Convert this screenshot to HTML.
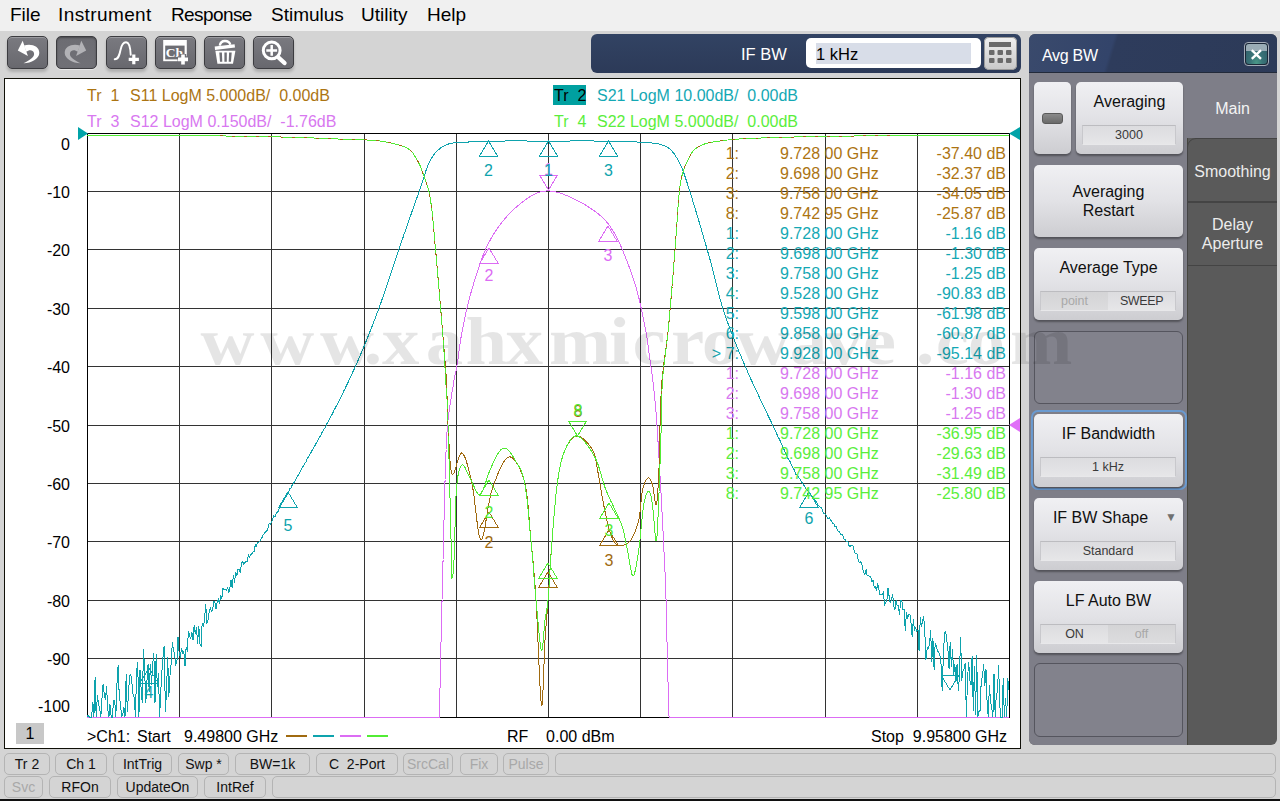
<!DOCTYPE html>
<html><head><meta charset="utf-8">
<style>
*{margin:0;padding:0;box-sizing:border-box}
html,body{width:1280px;height:801px;overflow:hidden;background:#d4d4d4;font-family:"Liberation Sans",sans-serif}
.abs{position:absolute}
#menu{position:absolute;left:0;top:0;width:1280px;height:31px;background:#f0f0f0}
#menu span{position:absolute;top:4px;font-size:19px;color:#000;white-space:nowrap}
.tb{position:absolute;top:36px;width:41px;height:33px;border-radius:5px;background:linear-gradient(#7a7a80,#68686e);border:1px solid #3c3c40;box-shadow:0 3px 3px rgba(0,0,0,0.18), inset 0 1px 0 rgba(255,255,255,0.25)}
.tb svg{position:absolute;left:0;top:0}
#ifbw{position:absolute;left:591px;top:34px;width:430px;height:39px;border-radius:6px;background:linear-gradient(#324363,#2c3a58)}
#chart{position:absolute;left:4px;top:78px;width:1017px;height:671px;background:#fff;border:1px solid #101008}
.tr{position:absolute;left:0;top:0}
.hd{position:absolute;font-size:16px;white-space:pre;line-height:17px}
.yl{position:absolute;left:16px;width:49px;text-align:right;font-size:16px;line-height:19px;color:#000}
.mr{position:absolute;left:0;height:19px;font-size:16px;line-height:19px;white-space:nowrap}
.m1{position:absolute;left:688px;width:51px;text-align:right}
.m2{position:absolute;left:780px}
.m3{position:absolute;left:900px;width:106px;text-align:right}
#panel{position:absolute;left:1029px;top:34px;width:248px;height:711px;border-radius:6px;background:#5a5a5a;overflow:hidden}
#phd{position:absolute;left:0;top:0;width:249px;height:39px;background:linear-gradient(107deg,#3a4a6c 0%,#33446a 33%,#2e3c5c 34.5%,#2c3a58 100%);border-bottom:1px solid #222a3a}
#pbody{position:absolute;left:0;top:39px;width:159px;height:672px;background:#7e7e88}
.btn{position:absolute;left:5px;width:149px;border-radius:5px;background:linear-gradient(#f0f0f3,#e2e2e6 50%,#cdcdd1);box-shadow:0 2px 2px rgba(0,0,0,0.35);text-align:center;color:#101010;font-size:16px}
.blank{position:absolute;left:5px;width:149px;border-radius:6px;background:#82828c;border:1px solid #55555e}
.vb{position:absolute;left:6px;width:136px;height:20px;border:1px solid #c8c8cc;border-top-color:#bcbcc0;border-bottom-color:#e8e8ea;background:linear-gradient(#dcdcdf,#e6e6e8);font-size:12.5px;line-height:18px;color:#3a3a3a;text-align:center}
.tab{position:absolute;left:159px;width:89px;color:#ececec;font-size:16px;text-align:center;line-height:19px}
#status{position:absolute;left:0;top:749px;width:1280px;height:52px;background:#d4d4d4}
.sb{white-space:pre;position:absolute;height:22px;border:1px solid #b4b4b4;border-radius:5px;background:#d4d4d4;font-size:14px;line-height:20px;text-align:center;color:#111}
.dis{color:#a8a8a8}
#wm{position:absolute;left:0;top:0}
</style></head><body>
<div id="menu">
<span style="left:10px">File</span>
<span style="left:58px;letter-spacing:0.4px">Instrument</span>
<span style="left:171px;letter-spacing:-0.6px">Response</span>
<span style="left:271px">Stimulus</span>
<span style="left:361px">Utility</span>
<span style="left:427px">Help</span>
</div>

<div class="tb" style="left:7px"><svg width="41" height="33" viewBox="0.5 1 41 33"><path d="M10.3 14.6L15.2 4.8L20.4 20Z" fill="#fff"/><path d="M16.5 9.5C24 7.5 31.8 10 31.8 17C31.5 23 24 27 15.9 27.3C22 24.5 27.5 21 26.5 17C25.5 13.5 21.5 13.5 18.8 15.8Z" fill="#fff"/></svg></div>
<div class="tb" style="left:56px;background:linear-gradient(#6c6c72,#707076);box-shadow:inset 0 1px 2px rgba(0,0,0,0.35),0 1px 0 rgba(255,255,255,0.45)"><svg width="41" height="33" viewBox="0.5 1 41 33"><g transform="translate(40 0) scale(-1 1)"><path d="M10.3 14.6L15.2 4.8L20.4 20Z" fill="#b2b2b6"/><path d="M16.5 9.5C24 7.5 31.8 10 31.8 17C31.5 23 24 27 15.9 27.3C22 24.5 27.5 21 26.5 17C25.5 13.5 21.5 13.5 18.8 15.8Z" fill="#b2b2b6"/></g></svg></div>
<div class="tb" style="left:106px"><svg width="41" height="33" viewBox="0.5 1 41 33"><path d="M8.2 23.3C12 23.3 13 19 14 14C15 9 16.5 6.2 19.5 6.2C22.5 6.2 23.8 9.5 24.2 18.7" stroke="#fff" stroke-width="1.9" fill="none" stroke-linecap="round"/><path d="M27.3 18.4V28.2M22.2 23.3H32.4" stroke="#fff" stroke-width="3.2"/></svg></div>
<div class="tb" style="left:155px"><svg width="41" height="33" viewBox="0.5 1 41 33"><path d="M7.7 4H31.3V25.2H7.7Z" fill="#fff"/><path d="M9.7 9.6H29.1V23.4H9.7Z" fill="#6e6e74"/><text x="10.2" y="20.9" font-family="Liberation Serif" font-weight="bold" font-size="13.5" fill="#fff" transform="rotate(0.01)">Ch</text><path d="M27.5 18V28.8M22.1 23.4H32.9" stroke="#6e6e74" stroke-width="6.5"/><path d="M27.5 18.4V28.4M22.5 23.4H32.5" stroke="#fff" stroke-width="3.6"/></svg></div>
<div class="tb" style="left:204px"><svg width="41" height="33" viewBox="0.5 1 41 33"><path d="M15.3 9.6C15.8 6 18 5 20.5 5C23 5 25.2 6.2 25.8 8.8" stroke="#fff" stroke-width="2.4" fill="none"/><path d="M10.2 10.5L30.1 8.2L30.5 11.6L10.5 13.9Z" fill="#fff"/><path d="M10.9 14.8H30.9L28.5 27.7H12.9Z" fill="#fff"/><path d="M14.8 16.4H17.4L17.8 25.8H15.5ZM19.9 16.4H22.3V25.8H19.9ZM24.6 16.4H27.2L26.5 25.8H24.2Z" fill="#6e6e74"/></svg></div>
<div class="tb" style="left:253px"><svg width="41" height="33" viewBox="0.5 1 41 33"><circle cx="18.2" cy="14.4" r="8.4" stroke="#fff" stroke-width="3" fill="none"/><path d="M12.8 14.4H23.6M18.2 9V19.8" stroke="#fff" stroke-width="2.5"/><path d="M25 21.5L31 27" stroke="#fff" stroke-width="4.4" stroke-linecap="round"/></svg></div>

<div id="ifbw">
<div class="abs" style="left:150px;top:11px;color:#fff;font-size:16.5px">IF BW</div>
<div class="abs" style="left:215px;top:4px;width:175px;height:30px;background:#fff;border-radius:5px"></div>
<div class="abs" style="left:225px;top:9px;width:155px;height:21px;background:#d8dde8"></div>
<div class="abs" style="left:225px;top:11px;color:#000;font-size:16.5px">1 kHz</div>
<div class="abs" style="left:393px;top:3px;width:33px;height:33px;border-radius:5px;background:linear-gradient(#f0f0f0,#c8c8c8);box-shadow:inset 0 0 0 1px #9a9a9a">
<svg width="33" height="33" viewBox="0 0 33 33"><rect x="5" y="5" width="22" height="5" fill="#6a6a6a"/><g fill="#6a6a6a"><rect x="5" y="13" width="5.5" height="5" rx="1"/><rect x="13.5" y="13" width="5.5" height="5" rx="1"/><rect x="22" y="13" width="5.5" height="5" rx="1"/><rect x="5" y="21" width="5.5" height="5" rx="1"/><rect x="13.5" y="21" width="5.5" height="5" rx="1"/><rect x="22" y="21" width="5.5" height="5" rx="1"/></g></svg></div>
</div>

<div id="chart">
<div class="hd" style="left:82px;top:8px;color:#ac7412">Tr  1</div>
<div class="hd" style="left:125px;top:8px;color:#ac7412">S11 LogM 5.000dB/  0.00dB</div>
<div class="hd" style="left:82px;top:34px;color:#d878f0">Tr  3</div>
<div class="hd" style="left:125px;top:34px;color:#d878f0">S12 LogM 0.150dB/  -1.76dB</div>
<div class="abs" style="left:548px;top:6px;width:33px;height:20px;background:#00a0a0"></div>
<div class="hd" style="left:549px;top:8px;color:#000">Tr  2</div>
<div class="hd" style="left:592px;top:8px;color:#14a8b4">S21 LogM 10.00dB/  0.00dB</div>
<div class="hd" style="left:549px;top:34px;color:#5aee3c">Tr  4</div>
<div class="hd" style="left:592px;top:34px;color:#5aee3c">S22 LogM 5.000dB/  0.00dB</div>
<div class="yl" style="top:56px">0</div>
<div class="yl" style="top:104px">-10</div>
<div class="yl" style="top:162px">-20</div>
<div class="yl" style="top:221px">-30</div>
<div class="yl" style="top:279px">-40</div>
<div class="yl" style="top:338px">-50</div>
<div class="yl" style="top:396px">-60</div>
<div class="yl" style="top:454px">-70</div>
<div class="yl" style="top:513px">-80</div>
<div class="yl" style="top:571px">-90</div>
<div class="yl" style="top:618px">-100</div>
<div class="abs" style="left:11px;top:644px;width:28px;height:21px;background:#c8c8c8;font-size:16px;text-align:center;line-height:21px">1</div>
<div class="hd" style="left:82px;top:649px;color:#000">&gt;Ch1:</div><div class="hd" style="left:132px;top:649px;color:#000">Start</div><div class="hd" style="left:179px;top:649px;color:#000">9.49800 GHz</div>
<div class="abs" style="left:281px;top:656px;width:21px;height:2px;background:#a06a10"></div>
<div class="abs" style="left:308px;top:656px;width:21px;height:2px;background:#0ea3ad"></div>
<div class="abs" style="left:335px;top:656px;width:21px;height:2px;background:#dc6cf4"></div>
<div class="abs" style="left:362px;top:656px;width:21px;height:2px;background:#52ec34"></div>
<div class="hd" style="left:502px;top:649px;color:#000">RF    0.00 dBm</div>
<div class="hd" style="left:866px;top:649px;color:#000">Stop  9.95800 GHz</div>
</div>
<div class="abs" style="left:0;top:0;width:1280px;height:801px;pointer-events:none">
<svg class="tr" width="1280" height="801" viewBox="0 0 1280 801">
<path d="M87.5 133V717M179.5 133V717M271.5 133V717M364.5 133V717M456.5 133V717M548.5 133V717M640.5 133V717M732.5 133V717M825.5 133V717M917.5 133V717M1009.5 133V717M87 133.5H1010M87 191.5H1010M87 249.5H1010M87 308.5H1010M87 366.5H1010M87 425.5H1010M87 483.5H1010M87 541.5H1010M87 600.5H1010M87 658.5H1010M87 717.5H1010" stroke="#333" stroke-width="1" fill="none" shape-rendering="crispEdges"/>
<path d="M87 133.5H1010M87 717.5H1010" stroke="#000" stroke-width="1" fill="none" shape-rendering="crispEdges"/>
<path d="M87.5 133V718M1009.5 133V718" stroke="#000" stroke-width="1" fill="none" shape-rendering="crispEdges"/>
<path d="M87.0 717.5L439.5 717.5L440.5 660.5L440.5 660.0L440.5 659.4L440.5 658.9L440.6 658.2L440.6 657.6L440.6 656.9L440.6 656.2L440.6 655.5L440.6 654.8L440.7 654.0L440.7 653.2L440.7 652.3L440.7 651.5L440.7 650.6L440.8 649.7L440.8 648.8L440.8 647.9L440.8 646.9L440.9 645.9L440.9 644.9L440.9 643.9L440.9 642.9L441.0 641.9L441.0 640.8L441.0 639.8L441.0 638.7L441.1 637.6L441.1 636.5L441.1 635.4L441.2 634.2L441.2 633.1L441.2 632.0L441.2 630.8L441.3 629.7L441.3 628.5L441.3 627.4L441.4 626.2L441.4 625.1L441.4 623.9L441.4 622.7L441.5 621.6L441.5 620.4L441.5 619.2L441.6 618.1L441.6 616.9L441.6 615.8L441.6 614.6L441.7 613.5L441.7 612.3L441.7 611.2L441.8 610.1L441.8 609.0L441.8 607.9L441.8 606.8L441.9 605.7L441.9 604.6L441.9 603.6L441.9 602.5L442.0 601.5L442.0 600.5L442.0 599.5L442.1 598.5L442.1 597.5L442.1 596.5L442.1 595.5L442.1 594.5L442.2 593.5L442.2 592.5L442.2 591.5L442.2 590.5L442.3 589.5L442.3 588.5L442.3 587.5L442.4 586.5L442.4 585.5L442.4 584.5L442.4 583.5L442.4 582.5L442.5 581.5L442.5 580.5L442.5 579.5L442.6 578.5L442.6 577.5L442.6 576.5L442.6 575.5L442.6 574.5L442.7 573.5L442.7 572.5L442.7 571.5L442.8 570.5L442.8 569.5L442.8 568.5L442.8 567.5L442.9 566.5L442.9 565.5L442.9 564.5L442.9 563.5L442.9 562.5L443.0 561.5L443.0 560.5L443.0 559.5L443.1 558.5L443.1 557.5L443.1 556.5L443.1 555.5L443.1 554.5L443.2 553.5L443.2 552.5L443.2 551.5L443.2 550.5L443.3 549.5L443.3 548.5L443.3 547.5L443.4 546.5L443.4 545.5L443.4 544.5L443.4 543.5L443.4 542.5L443.5 541.5L443.5 540.5L443.5 539.5L443.5 538.5L443.6 537.5L443.6 536.5L443.6 535.5L443.6 534.5L443.7 533.5L443.7 532.5L443.7 531.5L443.7 530.4L443.8 529.4L443.8 528.4L443.8 527.4L443.8 526.4L443.9 525.4L443.9 524.4L443.9 523.4L443.9 522.3L443.9 521.3L444.0 520.3L444.0 519.3L444.0 518.3L444.0 517.3L444.1 516.3L444.1 515.2L444.1 514.2L444.1 513.2L444.1 512.2L444.2 511.2L444.2 510.2L444.2 509.2L444.2 508.2L444.3 507.2L444.3 506.2L444.3 505.1L444.3 504.1L444.4 503.1L444.4 502.1L444.4 501.1L444.4 500.1L444.5 499.1L444.5 498.1L444.5 497.1L444.5 496.1L444.6 495.1L444.6 494.2L444.6 493.2L444.6 492.2L444.7 491.2L444.7 490.2L444.7 489.2L444.7 488.2L444.8 487.3L444.8 486.3L444.8 485.3L444.9 484.4L444.9 483.4L444.9 482.4L445.0 481.5L445.0 480.5L445.0 479.5L445.1 478.4L445.1 477.4L445.1 476.3L445.2 475.3L445.2 474.2L445.2 473.2L445.3 472.1L445.3 471.1L445.3 470.1L445.4 469.0L445.4 468.0L445.4 466.9L445.5 465.9L445.5 464.9L445.5 463.8L445.6 462.8L445.6 461.8L445.6 460.7L445.7 459.7L445.7 458.7L445.7 457.7L445.8 456.6L445.8 455.6L445.8 454.6L445.9 453.6L445.9 452.6L446.0 451.6L446.0 450.5L446.0 449.5L446.1 448.5L446.1 447.5L446.2 446.5L446.2 445.5L446.3 444.6L446.3 443.6L446.3 442.6L446.4 441.6L446.5 440.6L446.5 439.6L446.6 438.7L446.6 437.7L446.7 436.7L446.7 435.8L446.8 434.8L446.9 433.9L446.9 432.9L447.0 432.0L447.0 431.0L447.1 430.1L447.2 429.2L447.3 428.2L447.3 427.3L447.4 426.4L447.5 425.5L447.6 424.4L447.7 423.3L447.8 422.1L447.9 421.0L448.1 419.9L448.2 418.8L448.3 417.6L448.5 416.5L448.6 415.4L448.7 414.3L448.9 413.1L449.0 412.0L449.2 410.9L449.3 409.8L449.5 408.6L449.7 407.5L449.8 406.4L450.0 405.3L450.1 404.3L450.3 403.2L450.5 402.1L450.6 401.0L450.8 400.0L451.0 398.9L451.1 397.9L451.3 396.9L451.5 395.9L451.6 394.9L451.8 393.9L451.9 392.9L452.1 392.0L452.3 391.0L452.4 390.1L452.6 389.2L452.7 388.3L452.9 387.4L453.0 386.6L453.1 385.7L453.3 384.9L453.4 384.1L453.5 383.4L453.7 382.6L453.8 381.9L453.9 381.2L454.0 380.5L454.3 378.7L454.6 377.2L454.8 375.9L455.0 374.9L455.2 374.0L455.3 373.3L455.5 372.7L455.7 372.1L455.8 371.5L456.0 370.9L456.1 370.2L456.3 369.3L456.5 368.3L456.7 367.0L457.0 365.5L457.1 364.8L457.2 364.0L457.4 363.2L457.5 362.4L457.6 361.6L457.7 360.7L457.8 359.9L458.0 359.0L458.1 358.0L458.2 357.1L458.4 356.1L458.5 355.2L458.6 354.2L458.8 353.2L458.9 352.2L459.0 351.1L459.2 350.1L459.3 349.0L459.5 348.0L459.6 346.9L459.8 345.8L459.9 344.7L460.1 343.6L460.3 342.5L460.4 341.4L460.6 340.3L460.8 339.2L460.9 338.1L461.1 337.0L461.3 335.9L461.5 334.8L461.7 333.7L461.9 332.7L462.1 331.6L462.3 330.5L462.5 329.6L462.7 328.7L462.8 327.7L463.0 326.8L463.2 325.9L463.4 324.9L463.6 324.0L463.8 323.0L464.0 322.1L464.2 321.1L464.4 320.2L464.6 319.2L464.8 318.3L465.0 317.3L465.2 316.3L465.4 315.4L465.6 314.4L465.8 313.4L466.0 312.4L466.3 311.5L466.5 310.5L466.7 309.5L466.9 308.5L467.2 307.5L467.4 306.5L467.6 305.5L467.9 304.5L468.1 303.5L468.4 302.5L468.6 301.5L468.9 300.5L469.1 299.5L469.4 298.5L469.7 297.5L469.9 296.5L470.2 295.5L470.5 294.5L470.7 293.5L471.0 292.5L471.3 291.5L471.6 290.5L471.9 289.6L472.1 288.6L472.4 287.6L472.7 286.7L473.0 285.7L473.3 284.7L473.6 283.7L473.9 282.7L474.2 281.7L474.5 280.7L474.8 279.7L475.1 278.7L475.4 277.7L475.7 276.7L476.0 275.7L476.4 274.7L476.7 273.7L477.0 272.6L477.3 271.6L477.7 270.6L478.0 269.6L478.3 268.6L478.7 267.6L479.0 266.6L479.3 265.6L479.7 264.6L480.0 263.6L480.4 262.6L480.7 261.6L481.1 260.6L481.4 259.7L481.8 258.7L482.1 257.7L482.5 256.8L482.9 255.9L483.2 255.0L483.6 254.0L484.0 253.1L484.3 252.3L484.7 251.4L485.1 250.5L485.4 249.7L485.8 248.8L486.2 248.0L486.7 247.0L487.2 245.9L487.7 244.9L488.2 243.9L488.7 242.9L489.2 241.9L489.7 241.0L490.2 240.0L490.7 239.1L491.2 238.2L491.7 237.3L492.3 236.4L492.8 235.5L493.3 234.6L493.8 233.8L494.4 232.9L494.9 232.1L495.5 231.2L496.0 230.4L496.6 229.6L497.1 228.8L497.7 228.0L498.2 227.2L498.8 226.4L499.4 225.6L500.0 224.8L500.6 224.1L501.1 223.3L501.7 222.5L502.3 221.8L503.0 221.0L503.6 220.3L504.2 219.5L504.8 218.8L505.5 218.0L506.2 217.2L506.9 216.4L507.6 215.7L508.3 214.9L509.0 214.1L509.8 213.3L510.5 212.6L511.3 211.8L512.0 211.1L512.8 210.3L513.6 209.6L514.4 208.9L515.1 208.1L515.9 207.4L516.7 206.7L517.5 206.1L518.3 205.4L519.1 204.7L519.8 204.1L520.6 203.4L521.4 202.8L522.2 202.2L522.9 201.6L523.7 201.0L524.4 200.5L525.2 199.9L525.9 199.4L526.6 198.9L527.3 198.4L528.0 197.9L528.7 197.5L529.8 196.8L530.8 196.2L531.8 195.6L532.8 195.0L533.8 194.5L534.7 194.0L535.6 193.6L536.6 193.2L537.5 192.8L538.4 192.5L539.3 192.2L540.2 191.9L541.1 191.6L542.1 191.4L543.0 191.3L544.0 191.1L544.9 191.0L545.9 191.0L547.0 190.9L548.0 190.9L548.9 190.9L549.8 191.0L550.7 191.0L551.6 191.1L552.5 191.3L553.4 191.4L554.4 191.6L555.3 191.8L556.3 192.0L557.2 192.2L558.2 192.5L559.1 192.8L560.1 193.1L561.1 193.4L562.1 193.8L563.1 194.1L564.1 194.5L565.1 194.9L566.1 195.3L567.1 195.7L568.1 196.1L569.1 196.6L570.2 197.0L571.2 197.5L572.0 197.9L572.8 198.3L573.7 198.7L574.5 199.1L575.4 199.5L576.3 200.0L577.2 200.4L578.1 200.9L579.0 201.4L579.9 201.9L580.8 202.4L581.7 202.9L582.7 203.4L583.6 203.9L584.5 204.5L585.4 205.0L586.3 205.6L587.2 206.1L588.1 206.7L589.0 207.3L589.9 207.8L590.8 208.4L591.6 209.0L592.5 209.5L593.3 210.1L594.1 210.7L594.9 211.2L595.6 211.8L596.4 212.4L597.1 212.9L597.8 213.5L598.7 214.2L599.5 214.9L600.3 215.6L601.1 216.3L601.9 217.0L602.6 217.7L603.3 218.4L604.0 219.1L604.7 219.8L605.3 220.5L606.0 221.2L606.6 221.9L607.2 222.7L607.8 223.4L608.4 224.2L609.0 224.9L609.6 225.7L610.2 226.6L610.7 227.4L611.3 228.3L611.9 229.2L612.5 230.1L613.1 231.0L613.7 232.0L614.2 232.8L614.6 233.5L615.1 234.3L615.5 235.1L616.0 236.0L616.4 236.8L616.8 237.6L617.3 238.5L617.7 239.4L618.1 240.3L618.6 241.2L619.0 242.1L619.4 243.0L619.8 243.9L620.3 244.9L620.7 245.8L621.1 246.8L621.5 247.7L621.9 248.7L622.3 249.7L622.7 250.6L623.1 251.6L623.5 252.6L623.9 253.5L624.3 254.5L624.7 255.5L625.1 256.5L625.5 257.4L625.9 258.4L626.2 259.4L626.6 260.3L627.0 261.3L627.4 262.2L627.7 263.2L628.1 264.1L628.4 265.0L628.8 265.9L629.1 266.9L629.5 267.8L629.8 268.7L630.2 269.6L630.5 270.6L630.8 271.5L631.2 272.5L631.5 273.4L631.8 274.3L632.1 275.3L632.5 276.2L632.8 277.2L633.1 278.1L633.4 279.1L633.7 280.1L634.1 281.0L634.4 282.0L634.7 283.0L635.0 284.0L635.3 285.0L635.6 286.0L635.9 287.0L636.2 288.0L636.5 289.0L636.7 290.0L637.0 291.0L637.3 292.1L637.6 293.1L637.8 294.0L638.1 295.0L638.3 295.9L638.6 296.9L638.8 297.9L639.1 298.8L639.3 299.9L639.5 300.9L639.8 301.9L640.0 302.9L640.3 304.0L640.5 305.0L640.7 306.1L640.9 307.1L641.2 308.2L641.4 309.3L641.6 310.3L641.8 311.4L642.1 312.4L642.3 313.5L642.5 314.5L642.7 315.6L642.9 316.6L643.1 317.6L643.3 318.6L643.5 319.6L643.7 320.6L643.9 321.6L644.1 322.5L644.3 323.5L644.5 324.4L644.6 325.3L644.8 326.2L645.0 327.1L645.1 327.9L645.3 328.7L645.5 329.5L645.6 330.3L645.9 331.7L646.1 332.9L646.3 334.0L646.5 335.0L646.6 335.8L646.8 336.7L646.9 337.4L647.0 338.2L647.2 338.9L647.3 339.6L647.4 340.3L647.5 341.1L647.6 341.9L647.7 342.8L647.8 343.8L648.0 344.8L648.1 346.0L648.3 347.3L648.5 348.8L648.7 350.5L648.8 351.2L648.9 351.9L649.0 352.7L649.1 353.4L649.2 354.2L649.3 355.0L649.4 355.7L649.5 356.5L649.7 357.4L649.8 358.2L649.9 359.0L650.0 359.9L650.1 360.8L650.3 361.6L650.4 362.5L650.5 363.4L650.7 364.3L650.8 365.3L650.9 366.2L651.1 367.2L651.2 368.1L651.3 369.1L651.5 370.1L651.6 371.1L651.7 372.1L651.9 373.1L652.0 374.1L652.1 375.2L652.3 376.2L652.4 377.3L652.6 378.3L652.7 379.4L652.8 380.5L653.0 381.6L653.1 382.7L653.2 383.8L653.4 385.0L653.5 386.1L653.6 387.3L653.8 388.4L653.9 389.6L654.0 390.8L654.2 392.0L654.3 393.1L654.4 394.4L654.5 395.6L654.7 396.8L654.8 398.0L654.9 399.3L655.0 400.5L655.1 401.3L655.1 402.2L655.2 403.0L655.3 403.9L655.4 404.8L655.4 405.6L655.5 406.5L655.6 407.4L655.7 408.3L655.7 409.2L655.8 410.1L655.9 411.0L656.0 411.9L656.0 412.8L656.1 413.7L656.2 414.7L656.2 415.6L656.3 416.5L656.4 417.5L656.4 418.4L656.5 419.4L656.6 420.4L656.6 421.3L656.7 422.3L656.8 423.3L656.9 424.3L656.9 425.2L657.0 426.2L657.1 427.2L657.1 428.2L657.2 429.2L657.3 430.2L657.3 431.2L657.4 432.2L657.5 433.3L657.5 434.3L657.6 435.3L657.7 436.3L657.7 437.4L657.8 438.4L657.8 439.4L657.9 440.5L658.0 441.5L658.0 442.5L658.1 443.6L658.2 444.6L658.2 445.7L658.3 446.7L658.4 447.8L658.4 448.8L658.5 449.9L658.6 450.9L658.6 452.0L658.7 453.1L658.7 454.1L658.8 455.2L658.9 456.3L658.9 457.3L659.0 458.4L659.1 459.5L659.1 460.5L659.2 461.6L659.2 462.7L659.3 463.7L659.4 464.8L659.4 465.9L659.5 466.9L659.6 468.0L659.6 469.1L659.7 470.2L659.7 471.2L659.8 472.3L659.9 473.4L659.9 474.4L660.0 475.5L660.1 476.4L660.1 477.4L660.2 478.4L660.2 479.3L660.3 480.3L660.3 481.3L660.4 482.3L660.4 483.3L660.5 484.3L660.6 485.3L660.6 486.3L660.7 487.4L660.7 488.4L660.8 489.4L660.8 490.5L660.9 491.5L661.0 492.6L661.0 493.6L661.1 494.7L661.1 495.8L661.2 496.8L661.3 497.9L661.3 499.0L661.4 500.1L661.4 501.1L661.5 502.2L661.5 503.3L661.6 504.4L661.7 505.5L661.7 506.6L661.8 507.7L661.8 508.8L661.9 509.8L661.9 510.9L662.0 512.0L662.1 513.1L662.1 514.2L662.2 515.3L662.2 516.4L662.3 517.5L662.3 518.6L662.4 519.6L662.4 520.7L662.5 521.8L662.5 522.9L662.6 524.0L662.7 525.0L662.7 526.1L662.8 527.1L662.8 528.2L662.9 529.3L662.9 530.3L663.0 531.4L663.0 532.4L663.1 533.4L663.1 534.4L663.2 535.5L663.2 536.5L663.3 537.5L663.3 538.5L663.4 539.5L663.4 540.5L663.5 541.5L663.5 542.4L663.6 543.4L663.6 544.3L663.7 545.3L663.7 546.2L663.8 547.1L663.8 548.1L663.8 549.0L663.9 549.9L663.9 550.8L664.0 551.6L664.0 552.5L664.1 553.4L664.1 554.2L664.1 555.0L664.2 555.8L664.2 556.7L664.3 557.5L664.3 558.2L664.3 559.0L664.4 559.8L664.4 560.5L664.5 562.0L664.5 563.5L664.6 564.9L664.7 566.2L664.7 567.5L664.8 568.7L664.8 569.9L664.9 571.1L665.0 572.1L665.0 573.2L665.0 574.2L665.1 575.2L665.1 576.1L665.2 577.0L665.2 577.9L665.3 578.8L665.3 579.6L665.3 580.4L665.4 581.3L665.4 582.1L665.4 582.9L665.4 583.6L665.5 584.4L665.5 585.2L665.5 586.0L665.6 586.8L665.6 587.6L665.6 588.4L665.7 589.3L665.7 590.1L665.7 591.0L665.7 591.9L665.8 592.9L665.8 593.8L665.8 594.9L665.9 595.9L665.9 597.0L665.9 598.1L666.0 599.3L666.0 600.5L666.0 601.3L666.0 602.2L666.1 603.1L666.1 603.9L666.1 604.8L666.1 605.7L666.2 606.6L666.2 607.5L666.2 608.4L666.2 609.4L666.3 610.3L666.3 611.3L666.3 612.2L666.3 613.2L666.4 614.2L666.4 615.1L666.4 616.1L666.4 617.1L666.5 618.1L666.5 619.1L666.5 620.1L666.5 621.2L666.5 622.2L666.6 623.2L666.6 624.2L666.6 625.3L666.6 626.3L666.7 627.3L666.7 628.4L666.7 629.4L666.7 630.5L666.7 631.5L666.8 632.6L666.8 633.6L666.8 634.7L666.8 635.8L666.9 636.8L666.9 637.9L666.9 638.9L666.9 640.0L666.9 641.0L667.0 642.1L667.0 643.1L667.0 644.2L667.0 645.2L667.1 646.3L667.1 647.3L667.1 648.4L667.1 649.4L667.2 650.4L667.2 651.5L667.2 652.5L667.2 653.5L667.3 654.5L667.3 655.5L667.3 656.5L667.3 657.5L667.4 658.5L667.4 659.5L667.4 660.5L667.4 661.5L667.5 662.6L667.5 663.6L667.5 664.7L667.5 665.8L667.6 666.9L667.6 668.0L667.6 669.1L667.7 670.3L667.7 671.4L667.7 672.5L667.8 673.7L667.8 674.8L667.8 676.0L667.8 677.2L667.9 678.3L667.9 679.5L667.9 680.7L668.0 681.8L668.0 683.0L668.0 684.2L668.1 685.3L668.1 686.5L668.1 687.6L668.2 688.8L668.2 689.9L668.2 691.1L668.3 692.2L668.3 693.3L668.3 694.4L668.4 695.5L668.4 696.6L668.4 697.7L668.5 698.7L668.5 699.8L668.5 700.8L668.5 701.8L668.6 702.8L668.6 703.8L668.6 704.8L668.7 705.7L668.7 706.6L668.7 707.6L668.7 708.4L668.8 709.3L668.8 710.1L668.8 710.9L668.8 711.7L668.9 712.5L668.9 713.2L668.9 713.9L668.9 714.6L668.9 715.2L669.0 715.9L669.0 716.4L669.0 717.0L669.0 717.5L669.0 717.5L1009.0 717.5" stroke="#dc6cf4" stroke-width="1" fill="none" shape-rendering="crispEdges"/>
<path d="M87.0 717.0L88.2 715.3L89.3 717.0L90.5 717.0L91.6 717.0L92.8 701.6L93.9 717.0L95.1 677.5L96.2 717.0L97.4 695.0L98.5 703.9L99.7 708.3L100.8 717.0L102.0 698.2L103.1 684.4L104.3 693.9L105.4 699.8L106.6 685.8L107.7 709.2L108.9 717.0L110.0 704.5L111.2 717.0L112.4 717.0L113.5 700.4L114.7 700.4L115.8 717.0L117.0 683.5L118.1 665.5L119.3 697.3L120.4 703.4L121.6 715.9L122.7 714.9L123.9 706.9L125.0 717.0L126.2 674.1L127.3 712.1L128.5 693.6L129.6 675.3L130.8 674.2L131.9 683.0L133.1 695.0L134.3 697.5L135.4 717.0L136.6 672.1L137.7 662.0L138.9 717.0L140.0 670.1L141.2 690.0L142.3 702.9L143.5 649.1L144.6 669.4L145.8 703.2L146.9 681.6L148.1 664.0L149.2 692.0L150.4 663.8L151.5 684.5L152.7 664.3L153.8 652.6L155.0 703.0L156.2 653.7L157.3 686.8L158.5 673.5L159.6 717.0L160.8 690.6L161.9 671.3L163.1 655.6L164.2 645.8L165.4 711.5L166.5 690.3L167.7 656.7L168.8 696.5L170.0 675.7L171.1 664.4L172.3 642.4L173.4 649.6L174.6 654.0L175.7 664.4L176.9 662.7L178.0 636.7L179.2 654.1L180.4 656.9L181.5 647.8L182.7 652.8L183.8 651.7L185.0 666.3L186.1 647.0L187.3 651.5L188.4 630.9L189.6 634.9L190.7 639.3L191.9 632.0L193.0 640.4L194.2 624.9L195.3 634.2L196.5 626.6L197.6 643.6L198.8 626.0L199.9 644.2L201.1 645.9L202.2 622.8L203.4 626.9L204.6 619.3L205.7 603.7L206.9 623.8L208.0 620.1L209.2 611.2L210.3 608.0L211.5 610.8L212.6 609.7L213.8 601.9L214.9 601.9L216.1 609.3L217.2 601.9L218.4 599.4L219.5 603.7L220.7 595.0L221.8 598.8L223.0 587.8L224.1 590.2L225.3 589.1L226.5 590.5L227.6 586.8L228.8 593.0L229.9 587.5L231.1 580.0L232.2 588.1L233.4 575.2L234.5 582.6L235.7 572.4L236.8 576.1L238.0 569.3L239.1 569.7L240.3 573.2L241.4 563.5L242.6 561.6L243.7 563.9L244.9 562.8L246.0 560.9L247.2 561.3L248.4 554.8L249.5 556.8L250.7 554.1L251.8 554.0L253.0 551.9L254.1 551.5L255.3 544.9L256.4 545.8L257.6 542.1L258.7 542.0L259.9 541.3L261.0 538.9L262.2 537.4L263.3 534.7L264.5 533.4L265.6 531.3L266.8 531.0L267.9 528.3L269.1 523.3L270.2 524.1L271.4 522.6L272.6 519.1L273.7 516.1L274.9 517.1L276.0 513.8L277.2 512.2L278.3 511.2L279.5 507.0L280.6 505.6L281.8 503.6L282.9 502.2L284.1 499.2L285.2 498.0L286.4 495.7L287.5 494.3L288.7 492.3L289.8 488.7L291.0 487.8L292.1 485.3L293.3 483.5L294.5 481.7L295.6 479.7L296.8 477.2L297.9 475.6L299.1 473.5L300.2 471.5L301.4 469.0L302.5 467.2L303.7 465.3L304.8 463.6L306.0 461.9L307.1 459.1L308.3 457.1L309.4 455.4L310.6 453.2L311.7 451.1L312.9 449.0L314.0 447.0L315.2 445.3L316.3 442.8L317.5 441.4L318.7 438.8L319.8 436.8L321.0 434.7L322.1 432.4L323.3 430.4L324.4 428.7L325.6 426.7L326.7 424.1L327.9 422.3L329.0 420.0L330.2 417.6L331.3 415.8L332.5 413.7L333.6 411.1L334.8 408.9L335.9 406.7L337.1 404.5L338.2 402.3L339.4 400.1L340.6 397.6L341.7 395.4L342.9 393.1L344.0 390.6L345.2 388.3L346.3 385.9L347.5 383.6L348.6 381.1L349.8 378.7L350.9 376.2L352.1 373.6L353.2 371.2L354.4 368.6L355.5 366.0L356.7 363.4L357.8 360.9L359.0 358.2L360.1 355.5L361.3 352.8L362.4 350.2L363.6 347.4L364.8 344.6L365.9 341.8L367.1 338.9L368.2 336.1L369.4 333.1L370.5 330.3L371.7 327.4L372.8 324.4L374.0 321.4L375.1 318.4L376.3 315.3L377.4 312.2L378.6 309.1L379.7 306.0L380.9 302.8L382.0 299.6L383.2 296.3L384.3 293.0L385.5 289.6L386.7 286.1L387.8 282.7L389.0 279.2L390.1 275.7L391.3 272.2L392.4 268.7L393.6 265.2L394.7 261.7L395.9 258.2L397.0 254.8L398.2 251.4L399.3 248.1L400.5 244.7L401.6 241.4L402.8 238.1L403.9 234.7L405.1 231.4L406.2 228.1L407.4 224.8L408.5 221.5L409.7 218.2L410.9 214.9L412.0 211.6L413.2 208.4L414.3 205.1L415.5 201.8L416.6 198.6L417.8 195.3L418.9 192.0L420.1 188.8L421.2 185.5L422.4 182.0L423.5 178.5L424.7 174.8L425.8 171.2L427.0 167.9L428.1 164.8L429.3 162.2L430.4 160.0L431.6 158.0L432.8 156.2L433.9 154.6L435.1 153.2L436.2 151.9L437.4 150.7L438.5 149.7L439.7 148.8L440.8 147.9L442.0 147.2L443.1 146.5L444.3 145.8L445.4 145.3L446.6 144.7L447.7 144.3L448.9 143.9L450.0 143.6L451.2 143.3L452.3 143.1L453.5 143.0L454.6 142.8L455.8 142.7L457.0 142.6L458.1 142.5L459.3 142.5L460.4 142.4L461.6 142.4L462.7 142.3L463.9 142.2L465.0 142.2L466.2 142.1L467.3 142.0L468.5 142.0L469.6 141.9L470.8 141.8L471.9 141.7L473.1 141.7L474.2 141.6L475.4 141.6L476.5 141.5L477.7 141.5L478.9 141.4L480.0 141.4L481.2 141.3L482.3 141.3L483.5 141.3L484.6 141.3L485.8 141.2L486.9 141.2L488.1 141.2L489.2 141.2L490.4 141.1L491.5 141.1L492.7 141.1L493.8 141.1L495.0 141.1L496.1 141.0L497.3 141.0L498.4 141.0L499.6 141.0L500.7 141.0L501.9 141.0L503.1 141.0L504.2 141.0L505.4 141.0L506.5 140.9L507.7 140.9L508.8 140.9L510.0 140.9L511.1 140.9L512.3 140.9L513.4 140.9L514.6 140.9L515.7 140.9L516.9 140.9L518.0 140.9L519.2 140.9L520.3 140.9L521.5 140.9L522.6 140.9L523.8 140.9L525.0 140.9L526.1 140.9L527.3 141.0L528.4 141.0L529.6 141.0L530.7 141.0L531.9 141.0L533.0 141.0L534.2 141.0L535.3 141.0L536.5 141.0L537.6 141.0L538.8 141.0L539.9 141.0L541.1 141.0L542.2 141.0L543.4 141.0L544.5 141.0L545.7 141.0L546.8 141.0L548.0 141.0L549.2 141.0L550.3 141.0L551.5 141.0L552.6 141.0L553.8 141.0L554.9 141.0L556.1 141.0L557.2 141.0L558.4 141.0L559.5 141.0L560.7 141.0L561.8 141.0L563.0 141.0L564.1 141.0L565.3 141.0L566.4 141.0L567.6 141.0L568.7 141.0L569.9 141.0L571.0 140.9L572.2 140.9L573.4 140.9L574.5 140.9L575.7 140.9L576.8 140.9L578.0 140.9L579.1 140.9L580.3 140.9L581.4 140.9L582.6 140.9L583.7 140.9L584.9 140.9L586.0 140.9L587.2 140.9L588.3 140.9L589.5 140.9L590.6 140.9L591.8 140.9L592.9 140.9L594.1 141.0L595.3 141.0L596.4 141.0L597.6 141.0L598.7 141.0L599.9 141.0L601.0 141.0L602.2 141.0L603.3 141.0L604.5 141.0L605.6 141.1L606.8 141.1L607.9 141.1L609.1 141.1L610.2 141.1L611.4 141.1L612.5 141.1L613.7 141.1L614.8 141.2L616.0 141.2L617.2 141.2L618.3 141.2L619.5 141.2L620.6 141.3L621.8 141.3L622.9 141.3L624.1 141.4L625.2 141.4L626.4 141.4L627.5 141.5L628.7 141.5L629.8 141.6L631.0 141.6L632.1 141.7L633.3 141.7L634.4 141.8L635.6 141.9L636.7 142.0L637.9 142.1L639.0 142.1L640.2 142.2L641.4 142.3L642.5 142.4L643.7 142.4L644.8 142.5L646.0 142.6L647.1 142.6L648.3 142.7L649.4 142.8L650.6 142.9L651.7 143.0L652.9 143.1L654.0 143.2L655.2 143.4L656.3 143.6L657.5 143.7L658.6 144.0L659.8 144.2L660.9 144.5L662.1 144.9L663.2 145.3L664.4 145.7L665.6 146.3L666.7 146.9L667.9 147.6L669.0 148.4L670.2 149.3L671.3 150.4L672.5 151.7L673.6 153.1L674.8 154.7L675.9 156.5L677.1 158.5L678.2 160.6L679.4 162.7L680.5 165.0L681.7 167.5L682.8 170.3L684.0 173.5L685.1 176.8L686.3 180.4L687.5 184.0L688.6 187.6L689.8 191.2L690.9 194.9L692.1 198.6L693.2 202.3L694.4 206.1L695.5 209.9L696.7 213.7L697.8 217.6L699.0 221.5L700.1 225.4L701.3 229.3L702.4 233.2L703.6 237.2L704.7 241.1L705.9 245.1L707.0 249.1L708.2 253.2L709.4 257.2L710.5 261.4L711.7 265.8L712.8 270.3L714.0 275.0L715.1 279.6L716.3 284.3L717.4 288.9L718.6 293.4L719.7 297.7L720.9 301.8L722.0 305.8L723.2 309.5L724.3 313.0L725.5 316.4L726.6 319.8L727.8 323.0L728.9 326.1L730.1 329.2L731.2 332.3L732.4 335.3L733.6 338.2L734.7 341.1L735.9 343.9L737.0 346.7L738.2 349.6L739.3 352.3L740.5 355.0L741.6 357.7L742.8 360.5L743.9 363.3L745.1 365.8L746.2 368.5L747.4 371.3L748.5 373.8L749.7 376.5L750.8 379.0L752.0 381.5L753.1 383.9L754.3 386.5L755.5 388.9L756.6 391.3L757.8 393.7L758.9 396.3L760.1 398.8L761.2 401.3L762.4 403.7L763.5 406.0L764.7 408.4L765.8 410.8L767.0 413.1L768.1 415.8L769.3 418.1L770.4 420.3L771.6 422.8L772.7 425.1L773.9 427.6L775.0 430.1L776.2 432.4L777.3 435.2L778.5 437.8L779.7 439.8L780.8 442.4L782.0 444.8L783.1 447.8L784.3 450.0L785.4 452.5L786.6 455.0L787.7 457.9L788.9 459.7L790.0 461.6L791.2 464.1L792.3 466.7L793.5 468.7L794.6 470.5L795.8 474.1L796.9 475.0L798.1 476.6L799.2 478.4L800.4 479.7L801.6 481.7L802.7 483.9L803.9 485.5L805.0 486.9L806.2 489.2L807.3 490.5L808.5 491.4L809.6 492.2L810.8 495.1L811.9 496.5L813.1 497.8L814.2 498.5L815.4 501.0L816.5 501.3L817.7 504.7L818.8 505.6L820.0 507.1L821.1 507.8L822.3 509.1L823.4 513.0L824.6 513.9L825.8 514.2L826.9 516.7L828.1 519.1L829.2 517.8L830.4 519.8L831.5 521.3L832.7 523.8L833.8 523.5L835.0 526.5L836.1 526.2L837.3 530.3L838.4 531.7L839.6 531.8L840.7 534.4L841.9 533.9L843.0 536.1L844.2 539.5L845.3 539.5L846.5 541.8L847.7 541.2L848.8 545.4L850.0 546.7L851.1 545.3L852.3 545.1L853.4 547.1L854.6 552.7L855.7 553.9L856.9 553.1L858.0 558.6L859.2 562.4L860.3 561.7L861.5 562.8L862.6 568.2L863.8 572.8L864.9 574.2L866.1 569.6L867.2 576.0L868.4 575.8L869.5 576.4L870.7 576.7L871.9 581.7L873.0 580.2L874.2 587.1L875.3 586.7L876.5 591.1L877.6 583.4L878.8 588.4L879.9 594.3L881.1 594.1L882.2 594.8L883.4 591.6L884.5 604.7L885.7 602.9L886.8 600.9L888.0 588.1L889.1 596.2L890.3 603.1L891.4 599.8L892.6 593.7L893.8 606.5L894.9 609.4L896.1 600.2L897.2 606.0L898.4 605.3L899.5 614.7L900.7 600.4L901.8 600.3L903.0 609.6L904.1 609.7L905.3 630.5L906.4 612.1L907.6 618.8L908.7 614.5L909.9 614.2L911.0 623.2L912.2 636.6L913.3 619.2L914.5 629.9L915.6 627.6L916.8 631.4L918.0 630.0L919.1 651.2L920.3 616.6L921.4 627.0L922.6 621.5L923.7 616.0L924.9 634.3L926.0 659.5L927.2 647.9L928.3 648.3L929.5 645.1L930.6 630.2L931.8 661.5L932.9 638.4L934.1 669.7L935.2 642.9L936.4 646.0L937.5 650.9L938.7 651.9L939.9 654.9L941.0 664.0L942.2 690.9L943.3 656.9L944.5 633.5L945.6 630.7L946.8 640.1L947.9 648.9L949.1 669.3L950.2 641.9L951.4 667.1L952.5 649.1L953.7 675.3L954.8 663.8L956.0 680.9L957.1 664.2L958.3 690.7L959.4 677.5L960.6 636.9L961.7 680.5L962.9 671.1L964.1 668.6L965.2 663.4L966.4 717.0L967.5 678.9L968.7 661.7L969.8 680.3L971.0 685.3L972.1 655.7L973.3 710.6L974.4 666.4L975.6 714.9L976.7 655.4L977.9 717.0L979.0 711.4L980.2 710.2L981.3 678.3L982.5 677.6L983.6 663.7L984.8 685.9L986.0 669.5L987.1 703.0L988.3 717.0L989.4 685.3L990.6 701.8L991.7 707.0L992.9 717.0L994.0 673.6L995.2 717.0L996.3 694.5L997.5 692.1L998.6 665.0L999.8 705.4L1000.9 717.0L1002.1 717.0L1003.2 678.4L1004.4 717.0L1005.5 698.0L1006.7 717.0L1007.8 678.5L1009.0 690.4" stroke="#0ea3ad" stroke-width="1" fill="none" shape-rendering="crispEdges"/>
<path d="M87.0 135.0L87.5 135.0L88.0 135.0L88.6 135.0L89.1 135.0L89.7 135.0L90.3 135.0L90.9 135.0L91.5 135.0L92.2 135.0L92.8 135.0L93.5 135.0L94.2 135.0L94.9 135.1L95.6 135.1L96.4 135.1L97.1 135.1L97.9 135.1L98.6 135.1L99.4 135.1L100.2 135.1L101.0 135.1L101.9 135.1L102.7 135.1L103.5 135.1L104.4 135.1L105.3 135.1L106.2 135.1L107.1 135.1L108.0 135.1L108.9 135.1L109.8 135.1L110.8 135.1L111.7 135.2L112.7 135.2L113.7 135.2L114.7 135.2L115.6 135.2L116.6 135.2L117.7 135.2L118.7 135.2L119.7 135.2L120.7 135.2L121.8 135.2L122.8 135.2L123.9 135.2L125.0 135.2L126.1 135.2L127.1 135.2L128.2 135.2L129.3 135.3L130.4 135.3L131.5 135.3L132.7 135.3L133.8 135.3L134.9 135.3L136.0 135.3L137.2 135.3L138.3 135.3L139.5 135.3L140.6 135.3L141.8 135.3L142.9 135.3L144.1 135.3L145.3 135.4L146.4 135.4L147.6 135.4L148.8 135.4L150.0 135.4L151.2 135.4L152.3 135.4L153.5 135.4L154.7 135.4L155.9 135.4L157.1 135.4L158.3 135.4L159.5 135.4L160.7 135.4L161.9 135.5L163.1 135.5L164.3 135.5L165.5 135.5L166.7 135.5L167.9 135.5L169.0 135.5L170.2 135.5L171.4 135.5L172.6 135.5L173.8 135.5L175.0 135.5L176.2 135.5L177.4 135.6L178.5 135.6L179.7 135.6L180.9 135.6L182.1 135.6L183.2 135.6L184.4 135.6L185.5 135.6L186.7 135.6L187.8 135.6L189.0 135.6L190.1 135.6L191.3 135.7L192.4 135.7L193.5 135.7L194.6 135.7L195.8 135.7L196.9 135.7L198.0 135.7L199.1 135.7L200.1 135.7L201.2 135.7L202.3 135.7L203.4 135.7L204.4 135.8L205.5 135.8L206.5 135.8L207.5 135.8L208.6 135.8L209.6 135.8L210.6 135.8L211.6 135.8L212.6 135.8L213.6 135.8L214.5 135.8L215.5 135.9L216.4 135.9L217.4 135.9L218.3 135.9L219.2 135.9L220.1 135.9L221.0 135.9L221.9 135.9L222.8 135.9L223.6 135.9L224.5 135.9L225.3 135.9L226.1 136.0L226.9 136.0L227.7 136.0L228.5 136.0L229.2 136.0L230.0 136.0L231.5 136.0L233.0 136.0L234.5 136.1L235.9 136.1L237.3 136.1L238.7 136.1L240.0 136.1L241.4 136.1L242.7 136.2L244.0 136.2L245.3 136.2L246.5 136.2L247.8 136.2L249.0 136.3L250.2 136.3L251.4 136.3L252.5 136.3L253.7 136.3L254.8 136.4L255.9 136.4L257.0 136.4L258.1 136.4L259.1 136.4L260.2 136.5L261.2 136.5L262.2 136.5L263.2 136.5L264.2 136.5L265.2 136.6L266.2 136.6L267.1 136.6L268.1 136.6L269.0 136.6L269.9 136.7L270.8 136.7L271.7 136.7L272.6 136.7L273.5 136.8L274.4 136.8L275.2 136.8L276.1 136.8L276.9 136.8L277.8 136.9L278.6 136.9L279.5 136.9L280.3 136.9L281.1 137.0L281.9 137.0L282.8 137.0L283.6 137.0L284.4 137.0L285.2 137.1L286.0 137.1L286.8 137.1L287.6 137.1L288.4 137.2L289.3 137.2L290.1 137.2L290.9 137.2L291.7 137.3L292.5 137.3L293.3 137.3L294.1 137.3L295.0 137.4L295.8 137.4L296.6 137.4L297.5 137.4L298.3 137.5L299.1 137.5L300.0 137.5L301.2 137.5L302.4 137.6L303.6 137.6L304.7 137.6L305.9 137.7L307.1 137.7L308.2 137.8L309.3 137.8L310.5 137.8L311.6 137.9L312.7 137.9L313.8 138.0L314.9 138.0L316.0 138.0L317.1 138.1L318.2 138.1L319.2 138.2L320.3 138.2L321.4 138.2L322.4 138.3L323.4 138.3L324.5 138.4L325.5 138.4L326.5 138.5L327.5 138.5L328.5 138.5L329.5 138.6L330.5 138.6L331.4 138.7L332.4 138.7L333.4 138.8L334.3 138.8L335.2 138.8L336.2 138.9L337.1 138.9L338.0 139.0L338.9 139.0L339.8 139.0L340.7 139.1L341.6 139.1L342.5 139.2L343.3 139.2L344.2 139.2L345.1 139.3L345.9 139.3L346.7 139.4L347.6 139.4L348.4 139.4L349.2 139.5L350.0 139.5L351.3 139.6L352.6 139.6L353.8 139.6L355.0 139.7L356.2 139.7L357.3 139.7L358.4 139.8L359.5 139.8L360.6 139.8L361.6 139.8L362.6 139.9L363.6 139.9L364.6 139.9L365.5 139.9L366.5 139.9L367.4 140.0L368.3 140.0L369.2 140.0L370.1 140.1L371.0 140.1L371.9 140.2L372.8 140.2L373.7 140.3L374.5 140.4L375.4 140.4L376.3 140.5L377.2 140.6L378.1 140.7L379.1 140.9L380.0 141.0L381.1 141.2L382.1 141.3L383.2 141.5L384.3 141.7L385.4 141.9L386.5 142.1L387.5 142.3L388.6 142.5L389.7 142.7L390.8 142.9L391.9 143.2L392.9 143.4L394.0 143.7L395.0 143.9L396.1 144.2L397.1 144.5L398.1 144.7L399.1 145.0L400.0 145.3L400.9 145.6L401.8 145.9L402.7 146.2L403.6 146.6L404.4 146.9L405.2 147.2L405.9 147.6L406.6 147.9L407.8 148.5L408.8 149.2L409.8 149.9L410.6 150.6L411.4 151.3L412.1 152.1L412.7 152.9L413.3 153.7L413.9 154.5L414.4 155.3L414.9 156.2L415.4 157.1L415.9 158.0L416.4 158.9L417.0 159.8L417.5 160.6L418.0 161.4L418.4 162.3L418.8 163.1L419.3 164.0L419.7 164.8L420.1 165.7L420.4 166.6L420.8 167.5L421.2 168.4L421.6 169.4L421.9 170.4L422.3 171.4L422.7 172.5L423.0 173.5L423.4 174.6L423.8 175.8L424.1 176.6L424.4 177.4L424.7 178.2L424.9 179.0L425.2 179.8L425.5 180.5L425.8 181.3L426.1 182.1L426.4 182.9L426.7 183.7L427.0 184.6L427.2 185.4L427.5 186.3L427.8 187.3L428.1 188.3L428.4 189.3L428.7 190.4L428.9 191.5L429.2 192.7L429.5 193.9L429.7 195.3L430.0 196.7L430.2 198.1L430.5 199.7L430.6 200.4L430.7 201.2L430.8 201.9L430.9 202.7L431.0 203.5L431.2 204.3L431.3 205.1L431.4 205.9L431.5 206.7L431.6 207.6L431.7 208.4L431.8 209.3L431.9 210.1L432.0 211.0L432.1 211.9L432.2 212.8L432.3 213.7L432.4 214.7L432.4 215.6L432.5 216.5L432.6 217.5L432.7 218.5L432.8 219.4L432.9 220.4L433.0 221.4L433.1 222.4L433.2 223.4L433.3 224.5L433.4 225.5L433.5 226.5L433.6 227.6L433.7 228.7L433.8 229.7L433.9 230.8L434.0 231.9L434.1 233.0L434.1 234.1L434.2 235.2L434.3 236.3L434.4 237.4L434.5 238.6L434.6 239.7L434.7 240.9L434.8 242.0L434.9 243.2L435.0 244.4L435.2 245.6L435.3 246.7L435.4 247.9L435.5 249.1L435.6 250.4L435.7 251.6L435.8 252.8L435.9 253.7L436.0 254.5L436.0 255.4L436.1 256.3L436.2 257.2L436.3 258.1L436.4 259.0L436.4 259.9L436.5 260.9L436.6 261.8L436.7 262.8L436.8 263.7L436.9 264.7L437.0 265.7L437.0 266.7L437.1 267.7L437.2 268.7L437.3 269.7L437.4 270.7L437.5 271.8L437.6 272.8L437.7 273.8L437.8 274.9L437.9 275.9L437.9 277.0L438.0 278.0L438.1 279.1L438.2 280.2L438.3 281.2L438.4 282.3L438.5 283.4L438.6 284.5L438.7 285.5L438.8 286.6L438.9 287.7L439.0 288.8L439.0 289.9L439.1 290.9L439.2 292.0L439.3 293.1L439.4 294.2L439.5 295.3L439.6 296.3L439.7 297.4L439.8 298.5L439.9 299.6L440.0 300.6L440.1 301.7L440.1 302.8L440.2 303.8L440.3 304.9L440.4 305.9L440.5 307.0L440.6 308.0L440.7 309.1L440.8 310.1L440.8 311.1L440.9 312.1L441.0 313.1L441.1 314.1L441.2 315.1L441.3 316.1L441.3 317.1L441.4 318.1L441.5 319.0L441.6 320.0L441.7 320.9L441.7 321.9L441.8 322.8L441.9 323.7L442.0 324.6L442.0 325.5L442.1 326.4L442.2 327.3L442.3 328.1L442.3 329.0L442.4 329.8L442.5 331.1L442.6 332.3L442.7 333.5L442.8 334.7L442.9 335.9L443.0 337.1L443.1 338.3L443.2 339.4L443.3 340.5L443.4 341.6L443.5 342.7L443.6 343.8L443.7 344.9L443.8 345.9L443.8 347.0L443.9 348.0L444.0 349.1L444.1 350.1L444.2 351.1L444.3 352.1L444.3 353.0L444.4 354.0L444.5 355.0L444.6 355.9L444.7 356.9L444.7 357.8L444.8 358.8L444.9 359.7L445.0 360.7L445.0 361.6L445.1 362.5L445.2 363.4L445.2 364.3L445.3 365.3L445.4 366.2L445.4 367.1L445.5 368.0L445.6 368.9L445.6 369.8L445.7 370.7L445.8 371.6L445.8 372.5L445.9 373.5L446.0 374.4L446.0 375.3L446.1 376.2L446.1 377.2L446.2 378.1L446.2 379.1L446.3 380.0L446.4 381.1L446.4 382.1L446.5 383.1L446.5 384.2L446.6 385.2L446.6 386.2L446.7 387.2L446.7 388.3L446.7 389.3L446.8 390.3L446.8 391.3L446.9 392.3L446.9 393.3L446.9 394.3L446.9 395.2L447.0 396.2L447.0 397.2L447.0 398.2L447.1 399.2L447.1 400.1L447.1 401.1L447.1 402.1L447.2 403.1L447.2 404.0L447.2 405.0L447.2 406.0L447.3 407.0L447.3 407.9L447.3 408.9L447.3 409.9L447.4 410.9L447.4 411.9L447.4 412.8L447.5 413.8L447.5 414.8L447.5 415.8L447.6 416.8L447.6 417.8L447.7 418.8L447.7 419.9L447.8 420.9L447.8 421.9L447.9 422.9L447.9 424.0L448.0 425.0L448.1 426.0L448.1 427.0L448.2 428.0L448.2 429.1L448.3 430.2L448.3 431.3L448.4 432.4L448.5 433.6L448.5 434.7L448.6 435.9L448.6 437.1L448.7 438.3L448.7 439.5L448.8 440.7L448.9 442.0L448.9 443.2L449.0 444.5L449.0 445.7L449.1 446.9L449.2 448.2L449.2 449.4L449.3 450.6L449.4 451.8L449.4 453.0L449.5 454.2L449.6 455.4L449.7 456.5L449.7 457.7L449.8 458.8L449.9 459.9L450.0 461.0L450.1 462.0L450.2 463.0L450.3 464.0L450.4 465.0L450.4 465.9L450.5 466.8L450.7 467.6L450.8 468.5L450.9 469.2L451.0 470.0L451.1 470.6L451.2 471.3L451.3 471.9L451.5 472.4L451.6 472.9L451.7 473.3L451.9 473.7L452.0 474.0L452.3 474.4L452.7 474.5L453.0 474.3L453.4 473.9L453.8 473.1L454.2 472.2L454.6 471.1L455.0 469.8L455.5 468.4L455.9 467.0L456.4 465.4L456.9 463.8L457.3 462.3L457.8 460.7L458.3 459.2L458.8 457.8L459.2 456.5L459.7 455.4L460.2 454.4L460.7 453.7L461.1 453.2L461.6 452.9L462.0 453.0L462.3 453.2L462.6 453.5L462.9 453.8L463.3 454.2L463.6 454.7L463.9 455.2L464.2 455.8L464.5 456.5L464.8 457.2L465.2 458.0L465.5 458.8L465.8 459.7L466.1 460.6L466.4 461.6L466.7 462.6L467.1 463.7L467.4 464.8L467.7 465.9L468.0 467.1L468.3 468.3L468.6 469.5L468.9 470.7L469.3 472.0L469.6 473.3L469.9 474.6L470.2 475.9L470.5 477.2L470.8 478.6L471.1 479.9L471.4 481.3L471.7 482.6L472.0 484.0L472.2 484.8L472.3 485.7L472.5 486.5L472.7 487.5L472.8 488.5L473.0 489.5L473.2 490.5L473.3 491.6L473.5 492.7L473.6 493.9L473.8 495.1L474.0 496.3L474.1 497.5L474.3 498.7L474.4 500.0L474.6 501.3L474.7 502.6L474.9 503.9L475.1 505.2L475.2 506.5L475.4 507.8L475.5 509.2L475.7 510.5L475.8 511.8L476.0 513.1L476.1 514.5L476.3 515.8L476.4 517.1L476.6 518.3L476.7 519.6L476.9 520.9L477.1 522.1L477.2 523.3L477.4 524.5L477.5 525.7L477.7 526.8L477.8 527.9L478.0 529.0L478.2 530.0L478.3 531.0L478.5 532.0L478.6 532.9L478.8 533.7L479.0 534.6L479.1 535.3L479.3 536.1L479.5 536.7L479.6 537.3L479.8 537.9L480.0 538.4L480.1 538.8L480.3 539.2L480.5 539.5L480.6 539.7L480.8 539.9L481.0 540.0L481.2 540.0L481.4 539.9L481.6 539.8L481.8 539.6L482.0 539.3L482.2 538.9L482.4 538.4L482.6 537.9L482.7 537.3L482.9 536.6L483.1 535.9L483.3 535.2L483.5 534.3L483.7 533.5L483.9 532.5L484.1 531.6L484.3 530.6L484.5 529.5L484.7 528.4L484.9 527.3L485.1 526.1L485.3 524.9L485.5 523.7L485.7 522.5L485.9 521.2L486.1 519.9L486.3 518.6L486.5 517.3L486.8 516.0L487.0 514.7L487.2 513.3L487.4 512.0L487.6 510.7L487.8 509.3L488.1 508.0L488.3 506.7L488.5 505.4L488.7 504.1L489.0 502.8L489.2 501.6L489.5 500.4L489.7 499.2L489.9 498.0L490.2 496.9L490.4 495.8L490.7 494.7L490.9 493.7L491.2 492.7L491.5 491.7L491.7 490.8L492.0 490.0L492.4 488.8L492.8 487.7L493.2 486.5L493.6 485.3L494.0 484.1L494.5 482.8L494.9 481.6L495.3 480.4L495.8 479.2L496.3 478.0L496.7 476.8L497.2 475.6L497.6 474.4L498.1 473.3L498.6 472.1L499.1 471.0L499.6 469.9L500.0 468.8L500.5 467.8L501.0 466.8L501.5 465.8L502.0 464.8L502.5 463.9L503.0 463.1L503.5 462.3L504.0 461.5L504.5 460.8L504.9 460.1L505.4 459.5L505.9 458.9L506.4 458.5L506.9 458.0L507.3 457.7L507.8 457.4L508.2 457.1L508.7 457.0L509.3 456.9L509.8 456.9L510.4 457.0L511.0 457.2L511.6 457.5L512.2 457.8L512.8 458.3L513.4 458.8L514.0 459.3L514.6 460.0L515.2 460.7L515.8 461.5L516.4 462.4L516.9 463.3L517.5 464.2L518.1 465.3L518.7 466.3L519.2 467.4L519.8 468.6L520.3 469.8L520.8 471.0L521.4 472.3L521.9 473.6L522.3 475.0L522.8 476.3L523.3 477.7L523.7 479.1L524.1 480.6L524.5 482.0L524.7 482.7L524.9 483.5L525.0 484.2L525.2 485.0L525.4 485.8L525.5 486.6L525.7 487.4L525.9 488.3L526.0 489.1L526.2 490.0L526.3 490.9L526.4 491.8L526.6 492.7L526.7 493.7L526.8 494.6L527.0 495.6L527.1 496.5L527.2 497.5L527.3 498.5L527.4 499.5L527.6 500.5L527.7 501.5L527.8 502.5L527.9 503.6L528.0 504.6L528.1 505.7L528.2 506.7L528.3 507.8L528.4 508.8L528.5 509.9L528.6 511.0L528.7 512.1L528.7 513.2L528.8 514.2L528.9 515.3L529.0 516.4L529.1 517.5L529.2 518.6L529.3 519.7L529.3 520.8L529.4 521.9L529.5 523.0L529.6 524.1L529.7 525.2L529.8 526.3L529.8 527.4L529.9 528.4L530.0 529.5L530.1 530.6L530.2 531.7L530.3 532.7L530.4 533.8L530.4 534.8L530.5 535.9L530.6 536.9L530.7 538.0L530.8 539.0L530.9 540.0L531.0 541.0L531.1 542.0L531.2 543.0L531.3 543.9L531.4 544.9L531.5 545.8L531.6 546.8L531.7 547.7L531.8 548.6L531.8 549.5L531.9 550.5L532.0 551.3L532.1 552.2L532.2 553.1L532.3 554.0L532.4 554.9L532.5 555.8L532.5 556.6L532.6 557.5L532.7 558.4L532.8 559.3L532.9 560.1L533.0 561.0L533.0 561.9L533.1 562.7L533.2 563.6L533.3 564.5L533.4 565.4L533.4 566.3L533.5 567.2L533.6 568.1L533.7 569.0L533.8 569.9L533.9 570.8L533.9 571.8L534.0 572.7L534.1 573.7L534.2 574.6L534.3 575.6L534.3 576.6L534.4 577.6L534.5 578.6L534.6 579.6L534.7 580.7L534.7 581.7L534.8 582.8L534.9 583.9L535.0 585.0L535.1 586.2L535.1 587.3L535.2 588.5L535.3 589.7L535.4 590.9L535.5 592.1L535.6 593.4L535.7 594.6L535.7 595.9L535.8 597.3L535.9 598.6L536.0 600.0L536.0 600.8L536.1 601.6L536.1 602.4L536.2 603.3L536.3 604.2L536.3 605.1L536.4 606.0L536.4 607.0L536.5 607.9L536.5 608.9L536.6 609.9L536.6 610.9L536.7 612.0L536.7 613.0L536.8 614.1L536.8 615.2L536.9 616.3L536.9 617.4L537.0 618.5L537.0 619.6L537.1 620.8L537.1 621.9L537.2 623.1L537.2 624.3L537.3 625.5L537.4 626.7L537.4 627.9L537.5 629.1L537.5 630.4L537.6 631.6L537.6 632.8L537.7 634.1L537.7 635.4L537.8 636.6L537.8 637.9L537.9 639.2L537.9 640.4L538.0 641.7L538.1 643.0L538.1 644.3L538.2 645.6L538.2 646.8L538.3 648.1L538.3 649.4L538.4 650.7L538.4 652.0L538.5 653.3L538.5 654.5L538.6 655.8L538.7 657.1L538.7 658.4L538.8 659.6L538.8 660.9L538.9 662.1L538.9 663.4L539.0 664.6L539.0 665.8L539.1 667.1L539.1 668.3L539.2 669.5L539.2 670.7L539.3 671.9L539.4 673.0L539.4 674.2L539.5 675.3L539.5 676.5L539.6 677.6L539.6 678.7L539.7 679.8L539.7 680.9L539.8 682.0L539.8 683.0L539.9 684.0L539.9 685.1L540.0 686.0L540.0 687.0L540.1 688.0L540.1 688.9L540.2 689.9L540.2 690.8L540.3 691.6L540.3 692.5L540.4 693.3L540.4 694.1L540.5 694.9L540.5 695.7L540.6 696.4L540.6 697.2L540.7 697.9L540.7 698.5L540.8 699.2L540.8 699.8L540.9 700.4L540.9 700.9L541.0 701.4L541.0 701.9L541.0 702.4L541.1 702.8L541.1 703.2L541.2 703.6L541.2 704.0L541.3 704.3L541.3 704.5L541.4 704.8L541.4 705.0L541.5 705.3L541.5 705.4L541.6 705.5L541.7 705.6L541.7 705.5L541.8 705.4L541.9 705.2L541.9 704.9L542.0 704.5L542.1 704.1L542.1 703.6L542.2 703.1L542.2 702.5L542.3 701.8L542.4 701.1L542.4 700.3L542.5 699.5L542.5 698.6L542.6 697.7L542.7 696.7L542.7 695.7L542.8 694.6L542.8 693.5L542.9 692.4L542.9 691.2L543.0 690.0L543.1 688.8L543.1 687.5L543.2 686.3L543.2 684.9L543.3 683.6L543.3 682.2L543.4 680.9L543.4 679.5L543.5 678.1L543.5 676.7L543.6 675.2L543.6 673.8L543.7 672.4L543.7 670.9L543.8 669.5L543.8 668.0L543.9 666.6L543.9 665.2L544.0 663.7L544.0 662.3L544.1 660.9L544.1 659.5L544.2 658.1L544.2 656.8L544.3 655.4L544.3 654.1L544.4 652.8L544.4 651.6L544.5 650.3L544.5 649.1L544.6 647.9L544.6 646.8L544.7 645.7L544.7 644.6L544.8 643.6L544.8 642.6L544.9 641.7L544.9 640.8L545.0 640.0L545.1 638.7L545.2 637.5L545.2 636.2L545.3 635.1L545.4 633.9L545.5 632.8L545.5 631.8L545.6 630.7L545.7 629.7L545.8 628.7L545.8 627.7L545.9 626.8L546.0 625.8L546.1 624.9L546.1 624.0L546.2 623.1L546.3 622.2L546.3 621.4L546.4 620.5L546.5 619.6L546.5 618.8L546.6 617.9L546.7 617.0L546.8 616.2L546.8 615.3L546.9 614.4L547.0 613.5L547.0 612.6L547.1 611.7L547.2 610.8L547.3 609.8L547.3 608.8L547.4 607.8L547.5 606.8L547.6 605.7L547.7 604.7L547.7 603.5L547.8 602.4L547.9 601.2L548.0 600.0L548.1 599.2L548.1 598.3L548.2 597.4L548.2 596.6L548.3 595.7L548.4 594.8L548.4 593.9L548.5 593.0L548.5 592.0L548.6 591.1L548.7 590.2L548.7 589.2L548.8 588.3L548.8 587.3L548.9 586.3L549.0 585.4L549.0 584.4L549.1 583.4L549.2 582.4L549.2 581.4L549.3 580.4L549.4 579.4L549.4 578.4L549.5 577.4L549.5 576.3L549.6 575.3L549.7 574.3L549.7 573.2L549.8 572.2L549.9 571.2L549.9 570.1L550.0 569.1L550.1 568.0L550.1 567.0L550.2 565.9L550.3 564.9L550.4 563.8L550.4 562.8L550.5 561.7L550.6 560.7L550.6 559.6L550.7 558.6L550.8 557.5L550.9 556.5L550.9 555.4L551.0 554.4L551.1 553.3L551.1 552.3L551.2 551.2L551.3 550.2L551.4 549.2L551.5 548.1L551.5 547.1L551.6 546.1L551.7 545.0L551.8 544.0L551.8 543.0L551.9 542.0L552.0 541.0L552.1 540.0L552.2 539.0L552.2 538.0L552.3 536.9L552.4 535.9L552.5 534.9L552.6 533.8L552.7 532.8L552.7 531.7L552.8 530.7L552.9 529.6L553.0 528.6L553.1 527.5L553.2 526.4L553.2 525.3L553.3 524.3L553.4 523.2L553.5 522.1L553.6 521.1L553.7 520.0L553.8 518.9L553.9 517.8L553.9 516.7L554.0 515.7L554.1 514.6L554.2 513.5L554.3 512.5L554.4 511.4L554.5 510.3L554.6 509.3L554.7 508.2L554.8 507.2L554.9 506.1L555.0 505.1L555.0 504.1L555.1 503.0L555.2 502.0L555.3 501.0L555.4 500.0L555.5 499.0L555.6 498.0L555.7 497.0L555.8 496.1L555.9 495.1L556.0 494.1L556.1 493.2L556.2 492.3L556.3 491.3L556.4 490.4L556.5 489.5L556.6 488.6L556.7 487.8L556.9 486.9L557.0 486.0L557.1 485.2L557.2 484.4L557.3 483.6L557.4 482.8L557.5 482.0L557.7 480.6L557.9 479.2L558.1 477.9L558.3 476.6L558.5 475.3L558.7 474.1L558.9 472.9L559.1 471.7L559.3 470.5L559.5 469.4L559.7 468.3L559.9 467.2L560.2 466.2L560.4 465.2L560.6 464.2L560.8 463.2L561.0 462.2L561.3 461.3L561.5 460.4L561.7 459.5L562.0 458.6L562.2 457.8L562.5 456.9L562.7 456.1L563.0 455.3L563.3 454.5L563.5 453.7L563.8 453.0L564.1 452.2L564.4 451.5L564.7 450.7L565.0 450.0L565.6 448.7L566.2 447.5L566.8 446.3L567.4 445.1L568.0 444.0L568.7 443.0L569.4 442.0L570.1 441.0L570.8 440.1L571.5 439.3L572.2 438.6L573.0 437.9L573.7 437.4L574.5 436.9L575.2 436.5L576.0 436.2L576.7 436.1L577.5 436.0L578.2 436.1L578.9 436.2L579.7 436.5L580.5 436.9L581.3 437.4L582.1 438.0L583.0 438.6L583.8 439.3L584.6 440.1L585.5 440.9L586.3 441.7L587.1 442.6L587.9 443.5L588.7 444.5L589.4 445.4L590.1 446.4L590.8 447.3L591.4 448.2L592.0 449.1L592.5 450.0L593.0 450.8L593.4 451.7L593.8 452.5L594.1 453.4L594.4 454.2L594.7 455.1L594.9 456.0L595.2 456.8L595.4 457.8L595.6 458.7L595.7 459.6L595.9 460.6L596.1 461.7L596.2 462.7L596.4 463.8L596.6 464.9L596.8 466.1L597.0 467.4L597.2 468.7L597.5 470.0L597.7 470.8L597.8 471.6L598.0 472.5L598.2 473.4L598.3 474.3L598.5 475.2L598.7 476.2L598.8 477.1L599.0 478.1L599.2 479.1L599.4 480.2L599.5 481.2L599.7 482.2L599.9 483.3L600.1 484.4L600.2 485.4L600.4 486.5L600.6 487.6L600.8 488.7L601.0 489.8L601.2 490.9L601.3 491.9L601.5 493.0L601.7 494.1L601.9 495.1L602.1 496.2L602.3 497.2L602.4 498.3L602.6 499.3L602.8 500.3L603.0 501.3L603.2 502.2L603.3 503.2L603.5 504.1L603.7 505.0L603.9 506.1L604.2 507.3L604.4 508.4L604.6 509.6L604.8 510.7L605.1 511.8L605.3 512.9L605.5 514.0L605.7 515.1L606.0 516.2L606.2 517.3L606.4 518.3L606.7 519.4L606.9 520.4L607.1 521.4L607.3 522.4L607.6 523.4L607.8 524.3L608.0 525.3L608.3 526.2L608.5 527.1L608.8 528.0L609.0 528.8L609.2 529.7L609.5 530.5L609.7 531.2L610.0 532.0L610.5 533.3L610.9 534.6L611.3 535.8L611.8 536.9L612.2 538.0L612.7 539.0L613.1 540.0L613.6 540.9L614.1 541.7L614.6 542.4L615.1 543.1L615.7 543.7L616.2 544.2L616.9 544.7L617.5 545.0L618.3 545.3L619.2 545.5L620.1 545.6L621.1 545.6L622.1 545.5L623.2 545.3L624.2 545.0L625.2 544.6L626.3 544.0L627.3 543.4L628.2 542.7L629.1 541.9L630.0 541.0L630.5 540.4L631.0 539.8L631.4 539.1L631.9 538.3L632.3 537.6L632.8 536.7L633.2 535.9L633.6 535.0L634.1 534.1L634.5 533.1L634.9 532.1L635.3 531.1L635.7 530.1L636.1 529.0L636.4 527.9L636.8 526.8L637.1 525.7L637.5 524.6L637.8 523.5L638.1 522.3L638.4 521.2L638.7 520.0L638.9 519.1L639.1 518.2L639.3 517.3L639.4 516.3L639.6 515.3L639.7 514.3L639.9 513.2L640.0 512.2L640.1 511.1L640.3 510.0L640.4 508.9L640.5 507.8L640.6 506.7L640.7 505.6L640.8 504.4L640.9 503.3L641.0 502.2L641.1 501.1L641.2 500.1L641.3 499.0L641.4 498.0L641.5 496.9L641.6 496.0L641.7 495.0L641.8 494.1L641.9 493.2L642.1 492.3L642.2 491.5L642.3 490.7L642.5 490.0L642.9 488.4L643.3 487.0L643.7 485.6L644.1 484.4L644.5 483.2L645.0 482.2L645.4 481.2L645.9 480.4L646.3 479.7L646.8 479.1L647.2 478.6L647.6 478.3L648.0 478.0L648.6 477.9L649.2 478.1L649.8 478.7L650.4 479.5L650.9 480.6L651.5 481.9L652.0 483.4L652.5 485.0L652.7 485.8L652.9 486.7L653.1 487.8L653.3 489.0L653.5 490.3L653.7 491.6L653.9 493.0L654.1 494.5L654.3 495.9L654.5 497.3L654.7 498.7L654.8 500.0L655.0 501.2L655.2 502.3L655.4 503.2L655.5 504.0L655.7 504.6L655.9 505.0L656.0 505.1L656.2 505.0L656.3 504.8L656.4 504.5L656.5 504.1L656.6 503.7L656.7 503.1L656.8 502.5L656.9 501.8L657.0 501.1L657.1 500.3L657.2 499.4L657.3 498.5L657.3 497.6L657.4 496.5L657.5 495.5L657.6 494.4L657.7 493.2L657.8 492.1L657.8 490.8L657.9 489.6L658.0 488.3L658.1 487.0L658.2 485.7L658.2 484.4L658.3 483.1L658.4 481.7L658.4 480.4L658.5 479.0L658.6 477.7L658.6 476.3L658.7 475.0L658.7 474.2L658.8 473.4L658.8 472.5L658.8 471.7L658.9 470.8L658.9 469.9L658.9 469.0L659.0 468.1L659.0 467.1L659.0 466.2L659.1 465.2L659.1 464.3L659.1 463.3L659.1 462.3L659.2 461.3L659.2 460.3L659.2 459.3L659.2 458.3L659.3 457.2L659.3 456.2L659.3 455.2L659.3 454.1L659.3 453.1L659.4 452.0L659.4 450.9L659.4 449.9L659.4 448.8L659.4 447.7L659.5 446.7L659.5 445.6L659.5 444.5L659.5 443.5L659.6 442.4L659.6 441.3L659.6 440.3L659.6 439.2L659.6 438.1L659.7 437.1L659.7 436.0L659.7 435.0L659.7 434.0L659.8 432.9L659.8 431.9L659.8 430.9L659.8 429.9L659.9 428.9L659.9 427.9L659.9 426.9L660.0 426.0L660.0 425.0L660.0 423.9L660.1 422.9L660.1 421.9L660.1 420.8L660.2 419.8L660.2 418.8L660.2 417.8L660.3 416.8L660.3 415.8L660.3 414.8L660.3 413.8L660.4 412.8L660.4 411.8L660.4 410.8L660.5 409.8L660.5 408.8L660.5 407.9L660.5 406.9L660.6 405.9L660.6 404.9L660.6 404.0L660.7 403.0L660.7 402.0L660.7 401.1L660.8 400.1L660.8 399.1L660.9 398.1L660.9 397.2L661.0 396.2L661.0 395.2L661.0 394.2L661.1 393.2L661.1 392.2L661.2 391.2L661.3 390.3L661.3 389.3L661.4 388.2L661.4 387.2L661.5 386.2L661.6 385.2L661.7 384.2L661.7 383.1L661.8 382.1L661.9 381.1L662.0 380.0L662.1 379.1L662.2 378.1L662.3 377.2L662.4 376.2L662.4 375.3L662.5 374.4L662.6 373.5L662.8 372.5L662.9 371.6L663.0 370.7L663.1 369.8L663.2 368.9L663.3 368.0L663.4 367.1L663.5 366.2L663.7 365.3L663.8 364.3L663.9 363.4L664.0 362.5L664.2 361.6L664.3 360.7L664.4 359.7L664.5 358.8L664.7 357.8L664.8 356.9L664.9 355.9L665.1 355.0L665.2 354.0L665.4 353.0L665.5 352.1L665.6 351.1L665.8 350.1L665.9 349.1L666.0 348.0L666.2 347.0L666.3 345.9L666.5 344.9L666.6 343.8L666.7 342.7L666.9 341.6L667.0 340.5L667.1 339.4L667.3 338.3L667.4 337.1L667.5 335.9L667.7 334.7L667.8 333.5L667.9 332.3L668.1 331.1L668.2 329.8L668.3 329.0L668.4 328.1L668.5 327.3L668.5 326.4L668.6 325.5L668.7 324.7L668.8 323.8L668.9 322.9L669.0 322.0L669.0 321.0L669.1 320.1L669.2 319.2L669.3 318.2L669.4 317.3L669.5 316.3L669.6 315.4L669.7 314.4L669.7 313.4L669.8 312.4L669.9 311.4L670.0 310.4L670.1 309.4L670.2 308.4L670.3 307.4L670.4 306.4L670.5 305.4L670.5 304.4L670.6 303.3L670.7 302.3L670.8 301.3L670.9 300.2L671.0 299.2L671.1 298.1L671.2 297.1L671.3 296.0L671.3 295.0L671.4 293.9L671.5 292.8L671.6 291.8L671.7 290.7L671.8 289.7L671.9 288.6L672.0 287.5L672.0 286.5L672.1 285.4L672.2 284.3L672.3 283.3L672.4 282.2L672.5 281.1L672.6 280.1L672.7 279.0L672.7 278.0L672.8 276.9L672.9 275.9L673.0 274.8L673.1 273.8L673.2 272.7L673.3 271.7L673.3 270.6L673.4 269.6L673.5 268.6L673.6 267.5L673.7 266.5L673.8 265.5L673.8 264.5L673.9 263.5L674.0 262.5L674.1 261.5L674.2 260.5L674.3 259.5L674.3 258.5L674.4 257.6L674.5 256.6L674.6 255.6L674.6 254.7L674.7 253.7L674.8 252.8L674.9 251.7L675.0 250.6L675.1 249.5L675.1 248.4L675.2 247.3L675.3 246.2L675.4 245.1L675.5 244.0L675.6 242.9L675.6 241.8L675.7 240.7L675.8 239.5L675.9 238.4L675.9 237.3L676.0 236.2L676.1 235.1L676.2 234.0L676.2 232.8L676.3 231.7L676.4 230.6L676.5 229.5L676.5 228.4L676.6 227.3L676.7 226.2L676.7 225.1L676.8 224.0L676.9 222.9L677.0 221.8L677.0 220.7L677.1 219.7L677.2 218.6L677.2 217.5L677.3 216.5L677.4 215.4L677.5 214.3L677.5 213.3L677.6 212.3L677.7 211.2L677.7 210.2L677.8 209.2L677.9 208.2L678.0 207.2L678.0 206.2L678.1 205.2L678.2 204.2L678.3 203.3L678.3 202.3L678.4 201.4L678.5 200.4L678.6 199.5L678.7 198.6L678.7 197.7L678.8 196.8L678.9 195.9L679.0 195.0L679.1 194.2L679.2 193.3L679.2 192.5L679.3 191.7L679.4 190.9L679.5 190.1L679.6 189.3L679.7 188.6L679.8 187.8L679.9 187.1L680.0 186.4L680.2 184.7L680.5 183.1L680.8 181.6L681.0 180.2L681.3 178.8L681.5 177.6L681.8 176.3L682.1 175.2L682.4 174.1L682.6 173.0L682.9 172.1L683.2 171.1L683.5 170.2L683.8 169.3L684.1 168.5L684.4 167.7L684.7 166.9L685.0 166.2L685.3 165.5L685.7 164.8L686.0 164.0L686.3 163.3L686.6 162.6L687.0 161.9L687.3 161.2L687.7 160.5L688.0 159.8L688.6 158.6L689.1 157.5L689.7 156.4L690.2 155.4L690.8 154.4L691.3 153.5L691.9 152.7L692.5 151.9L693.1 151.1L693.8 150.4L694.5 149.7L695.2 149.1L696.0 148.4L696.8 147.8L697.7 147.2L698.7 146.6L699.4 146.2L700.2 145.8L700.9 145.4L701.7 145.1L702.4 144.8L703.2 144.5L704.0 144.2L704.9 143.9L705.7 143.6L706.6 143.4L707.5 143.2L708.5 142.9L709.4 142.7L710.4 142.5L711.5 142.3L712.6 142.1L713.7 141.9L714.8 141.8L716.1 141.6L717.3 141.4L718.6 141.2L720.0 141.0L720.8 140.9L721.5 140.8L722.3 140.7L723.0 140.6L723.8 140.5L724.5 140.4L725.3 140.3L726.0 140.2L726.8 140.1L727.5 140.0L728.3 140.0L729.1 139.9L729.8 139.8L730.6 139.7L731.4 139.6L732.3 139.6L733.1 139.5L733.9 139.4L734.8 139.3L735.7 139.3L736.6 139.2L737.6 139.1L738.5 139.1L739.5 139.0L740.5 138.9L741.6 138.9L742.6 138.8L743.7 138.7L744.9 138.7L746.0 138.6L747.3 138.6L748.5 138.5L749.8 138.4L751.1 138.4L752.5 138.3L753.9 138.2L755.3 138.2L756.8 138.1L758.4 138.1L760.0 138.0L760.7 138.0L761.5 137.9L762.2 137.9L762.9 137.9L763.7 137.9L764.4 137.8L765.2 137.8L765.9 137.8L766.7 137.8L767.4 137.7L768.2 137.7L769.0 137.7L769.7 137.6L770.5 137.6L771.3 137.6L772.1 137.6L772.9 137.5L773.7 137.5L774.5 137.5L775.3 137.5L776.1 137.4L777.0 137.4L777.8 137.4L778.6 137.4L779.5 137.3L780.3 137.3L781.2 137.3L782.0 137.3L782.9 137.2L783.7 137.2L784.6 137.2L785.5 137.2L786.4 137.2L787.3 137.1L788.2 137.1L789.1 137.1L790.0 137.1L790.9 137.0L791.9 137.0L792.8 137.0L793.7 137.0L794.7 136.9L795.6 136.9L796.6 136.9L797.6 136.9L798.5 136.9L799.5 136.8L800.5 136.8L801.5 136.8L802.5 136.8L803.5 136.7L804.6 136.7L805.6 136.7L806.6 136.7L807.7 136.7L808.7 136.6L809.8 136.6L810.9 136.6L811.9 136.6L813.0 136.6L814.1 136.5L815.2 136.5L816.4 136.5L817.5 136.5L818.6 136.5L819.7 136.4L820.9 136.4L822.1 136.4L823.2 136.4L824.4 136.4L825.6 136.3L826.8 136.3L828.0 136.3L829.2 136.3L830.4 136.3L831.7 136.2L832.9 136.2L834.2 136.2L835.4 136.2L836.7 136.2L838.0 136.2L839.3 136.1L840.6 136.1L841.9 136.1L843.2 136.1L844.6 136.1L845.9 136.1L847.3 136.0L848.6 136.0L850.0 136.0L850.8 136.0L851.6 136.0L852.4 136.0L853.2 136.0L854.1 136.0L854.9 135.9L855.8 135.9L856.6 135.9L857.5 135.9L858.4 135.9L859.3 135.9L860.2 135.9L861.1 135.9L862.0 135.9L863.0 135.9L863.9 135.9L864.9 135.8L865.8 135.8L866.8 135.8L867.8 135.8L868.8 135.8L869.8 135.8L870.8 135.8L871.8 135.8L872.8 135.8L873.8 135.8L874.9 135.8L875.9 135.8L877.0 135.7L878.0 135.7L879.1 135.7L880.1 135.7L881.2 135.7L882.3 135.7L883.4 135.7L884.5 135.7L885.6 135.7L886.7 135.7L887.8 135.7L888.9 135.7L890.0 135.6L891.1 135.6L892.3 135.6L893.4 135.6L894.5 135.6L895.7 135.6L896.8 135.6L898.0 135.6L899.1 135.6L900.3 135.6L901.5 135.6L902.6 135.6L903.8 135.6L904.9 135.5L906.1 135.5L907.3 135.5L908.5 135.5L909.6 135.5L910.8 135.5L912.0 135.5L913.2 135.5L914.4 135.5L915.6 135.5L916.7 135.5L917.9 135.5L919.1 135.5L920.3 135.5L921.5 135.4L922.7 135.4L923.9 135.4L925.1 135.4L926.2 135.4L927.4 135.4L928.6 135.4L929.8 135.4L931.0 135.4L932.2 135.4L933.4 135.4L934.5 135.4L935.7 135.4L936.9 135.4L938.1 135.4L939.2 135.4L940.4 135.3L941.6 135.3L942.7 135.3L943.9 135.3L945.1 135.3L946.2 135.3L947.4 135.3L948.5 135.3L949.7 135.3L950.8 135.3L952.0 135.3L953.1 135.3L954.2 135.3L955.3 135.3L956.5 135.3L957.6 135.3L958.7 135.3L959.8 135.2L960.9 135.2L962.0 135.2L963.1 135.2L964.1 135.2L965.2 135.2L966.3 135.2L967.4 135.2L968.4 135.2L969.5 135.2L970.5 135.2L971.5 135.2L972.6 135.2L973.6 135.2L974.6 135.2L975.6 135.2L976.6 135.2L977.6 135.2L978.6 135.2L979.5 135.2L980.5 135.1L981.5 135.1L982.4 135.1L983.3 135.1L984.3 135.1L985.2 135.1L986.1 135.1L987.0 135.1L987.9 135.1L988.8 135.1L989.6 135.1L990.5 135.1L991.3 135.1L992.2 135.1L993.0 135.1L993.8 135.1L994.6 135.1L995.4 135.1L996.2 135.1L996.9 135.1L997.7 135.1L998.4 135.1L999.2 135.1L999.9 135.1L1000.6 135.0L1001.3 135.0L1001.9 135.0L1002.6 135.0L1003.3 135.0L1003.9 135.0L1004.5 135.0L1005.1 135.0L1005.7 135.0L1006.3 135.0L1006.9 135.0L1007.4 135.0L1008.0 135.0L1008.5 135.0L1009.0 135.0" stroke="#a06a10" stroke-width="1" fill="none" shape-rendering="crispEdges"/>
<path d="M87.0 135.0L87.5 135.0L88.0 135.0L88.6 135.0L89.1 135.0L89.7 135.0L90.3 135.0L90.9 135.0L91.5 135.0L92.2 135.0L92.8 135.0L93.5 135.0L94.2 135.0L94.9 135.1L95.6 135.1L96.4 135.1L97.1 135.1L97.9 135.1L98.6 135.1L99.4 135.1L100.2 135.1L101.0 135.1L101.9 135.1L102.7 135.1L103.5 135.1L104.4 135.1L105.3 135.1L106.2 135.1L107.1 135.1L108.0 135.1L108.9 135.1L109.8 135.1L110.8 135.1L111.7 135.2L112.7 135.2L113.7 135.2L114.7 135.2L115.6 135.2L116.6 135.2L117.7 135.2L118.7 135.2L119.7 135.2L120.7 135.2L121.8 135.2L122.8 135.2L123.9 135.2L125.0 135.2L126.1 135.2L127.1 135.2L128.2 135.2L129.3 135.3L130.4 135.3L131.5 135.3L132.7 135.3L133.8 135.3L134.9 135.3L136.0 135.3L137.2 135.3L138.3 135.3L139.5 135.3L140.6 135.3L141.8 135.3L142.9 135.3L144.1 135.3L145.3 135.4L146.4 135.4L147.6 135.4L148.8 135.4L150.0 135.4L151.2 135.4L152.3 135.4L153.5 135.4L154.7 135.4L155.9 135.4L157.1 135.4L158.3 135.4L159.5 135.4L160.7 135.4L161.9 135.5L163.1 135.5L164.3 135.5L165.5 135.5L166.7 135.5L167.9 135.5L169.0 135.5L170.2 135.5L171.4 135.5L172.6 135.5L173.8 135.5L175.0 135.5L176.2 135.5L177.4 135.6L178.5 135.6L179.7 135.6L180.9 135.6L182.1 135.6L183.2 135.6L184.4 135.6L185.5 135.6L186.7 135.6L187.8 135.6L189.0 135.6L190.1 135.6L191.3 135.7L192.4 135.7L193.5 135.7L194.6 135.7L195.8 135.7L196.9 135.7L198.0 135.7L199.1 135.7L200.1 135.7L201.2 135.7L202.3 135.7L203.4 135.7L204.4 135.8L205.5 135.8L206.5 135.8L207.5 135.8L208.6 135.8L209.6 135.8L210.6 135.8L211.6 135.8L212.6 135.8L213.6 135.8L214.5 135.8L215.5 135.9L216.4 135.9L217.4 135.9L218.3 135.9L219.2 135.9L220.1 135.9L221.0 135.9L221.9 135.9L222.8 135.9L223.6 135.9L224.5 135.9L225.3 135.9L226.1 136.0L226.9 136.0L227.7 136.0L228.5 136.0L229.2 136.0L230.0 136.0L231.5 136.0L233.0 136.0L234.5 136.1L235.9 136.1L237.3 136.1L238.7 136.1L240.0 136.1L241.4 136.1L242.7 136.2L244.0 136.2L245.3 136.2L246.5 136.2L247.8 136.2L249.0 136.3L250.2 136.3L251.4 136.3L252.5 136.3L253.7 136.3L254.8 136.4L255.9 136.4L257.0 136.4L258.1 136.4L259.1 136.4L260.2 136.5L261.2 136.5L262.2 136.5L263.2 136.5L264.2 136.5L265.2 136.6L266.2 136.6L267.1 136.6L268.1 136.6L269.0 136.6L269.9 136.7L270.8 136.7L271.7 136.7L272.6 136.7L273.5 136.8L274.4 136.8L275.2 136.8L276.1 136.8L276.9 136.8L277.8 136.9L278.6 136.9L279.5 136.9L280.3 136.9L281.1 137.0L281.9 137.0L282.8 137.0L283.6 137.0L284.4 137.0L285.2 137.1L286.0 137.1L286.8 137.1L287.6 137.1L288.4 137.2L289.3 137.2L290.1 137.2L290.9 137.2L291.7 137.3L292.5 137.3L293.3 137.3L294.1 137.3L295.0 137.4L295.8 137.4L296.6 137.4L297.5 137.4L298.3 137.5L299.1 137.5L300.0 137.5L301.2 137.5L302.4 137.6L303.6 137.6L304.7 137.6L305.9 137.7L307.1 137.7L308.2 137.8L309.3 137.8L310.5 137.8L311.6 137.9L312.7 137.9L313.8 138.0L314.9 138.0L316.0 138.0L317.1 138.1L318.2 138.1L319.2 138.2L320.3 138.2L321.4 138.2L322.4 138.3L323.4 138.3L324.5 138.4L325.5 138.4L326.5 138.5L327.5 138.5L328.5 138.5L329.5 138.6L330.5 138.6L331.4 138.7L332.4 138.7L333.4 138.8L334.3 138.8L335.2 138.8L336.2 138.9L337.1 138.9L338.0 139.0L338.9 139.0L339.8 139.0L340.7 139.1L341.6 139.1L342.5 139.2L343.3 139.2L344.2 139.2L345.1 139.3L345.9 139.3L346.7 139.4L347.6 139.4L348.4 139.4L349.2 139.5L350.0 139.5L351.3 139.6L352.6 139.6L353.8 139.6L355.0 139.7L356.2 139.7L357.3 139.7L358.4 139.8L359.5 139.8L360.6 139.8L361.6 139.8L362.6 139.9L363.6 139.9L364.6 139.9L365.5 139.9L366.5 139.9L367.4 140.0L368.3 140.0L369.2 140.0L370.1 140.1L371.0 140.1L371.9 140.2L372.8 140.2L373.7 140.3L374.5 140.4L375.4 140.4L376.3 140.5L377.2 140.6L378.1 140.7L379.1 140.9L380.0 141.0L381.1 141.2L382.1 141.3L383.2 141.5L384.3 141.7L385.4 141.9L386.5 142.1L387.5 142.3L388.6 142.5L389.7 142.7L390.8 142.9L391.9 143.2L392.9 143.4L394.0 143.7L395.0 143.9L396.1 144.2L397.1 144.5L398.1 144.7L399.1 145.0L400.0 145.3L400.9 145.6L401.8 145.9L402.7 146.2L403.6 146.6L404.4 146.9L405.2 147.2L405.9 147.6L406.6 147.9L407.8 148.5L408.8 149.2L409.8 149.9L410.6 150.6L411.4 151.3L412.1 152.1L412.7 152.9L413.3 153.7L413.9 154.5L414.4 155.3L414.9 156.2L415.4 157.1L415.9 158.0L416.4 158.9L417.0 159.8L417.5 160.6L418.0 161.4L418.4 162.3L418.8 163.1L419.3 164.0L419.7 164.8L420.1 165.7L420.4 166.6L420.8 167.5L421.2 168.4L421.6 169.4L421.9 170.4L422.3 171.4L422.7 172.5L423.0 173.5L423.4 174.6L423.8 175.8L424.1 176.6L424.4 177.4L424.7 178.2L424.9 179.0L425.2 179.8L425.5 180.5L425.8 181.3L426.1 182.1L426.4 182.9L426.7 183.7L427.0 184.6L427.2 185.4L427.5 186.3L427.8 187.3L428.1 188.3L428.4 189.3L428.7 190.4L428.9 191.5L429.2 192.7L429.5 193.9L429.7 195.3L430.0 196.7L430.2 198.1L430.5 199.7L430.6 200.4L430.7 201.2L430.8 201.9L430.9 202.7L431.0 203.5L431.2 204.3L431.3 205.1L431.4 205.9L431.5 206.7L431.6 207.6L431.7 208.4L431.8 209.3L431.9 210.1L432.0 211.0L432.1 211.9L432.2 212.8L432.3 213.7L432.4 214.7L432.4 215.6L432.5 216.5L432.6 217.5L432.7 218.5L432.8 219.4L432.9 220.4L433.0 221.4L433.1 222.4L433.2 223.4L433.3 224.5L433.4 225.5L433.5 226.5L433.6 227.6L433.7 228.7L433.8 229.7L433.9 230.8L434.0 231.9L434.1 233.0L434.1 234.1L434.2 235.2L434.3 236.3L434.4 237.4L434.5 238.6L434.6 239.7L434.7 240.9L434.8 242.0L434.9 243.2L435.0 244.4L435.2 245.6L435.3 246.7L435.4 247.9L435.5 249.1L435.6 250.4L435.7 251.6L435.8 252.8L435.9 253.7L436.0 254.5L436.0 255.4L436.1 256.3L436.2 257.2L436.3 258.1L436.4 259.0L436.4 259.9L436.5 260.9L436.6 261.8L436.7 262.8L436.8 263.7L436.9 264.7L437.0 265.7L437.1 266.7L437.1 267.7L437.2 268.7L437.3 269.7L437.4 270.7L437.5 271.8L437.6 272.8L437.7 273.8L437.8 274.9L437.9 275.9L438.0 277.0L438.1 278.0L438.1 279.1L438.2 280.2L438.3 281.2L438.4 282.3L438.5 283.4L438.6 284.5L438.7 285.5L438.8 286.6L438.9 287.7L439.0 288.8L439.1 289.9L439.2 290.9L439.3 292.0L439.4 293.1L439.5 294.2L439.5 295.3L439.6 296.3L439.7 297.4L439.8 298.5L439.9 299.6L440.0 300.6L440.1 301.7L440.2 302.8L440.3 303.8L440.4 304.9L440.5 305.9L440.5 307.0L440.6 308.0L440.7 309.1L440.8 310.1L440.9 311.1L441.0 312.1L441.1 313.1L441.1 314.1L441.2 315.1L441.3 316.1L441.4 317.1L441.5 318.1L441.5 319.0L441.6 320.0L441.7 320.9L441.8 321.9L441.8 322.8L441.9 323.7L442.0 324.6L442.1 325.5L442.1 326.4L442.2 327.3L442.3 328.1L442.3 329.0L442.4 329.8L442.5 331.1L442.6 332.3L442.7 333.5L442.8 334.7L442.9 335.9L443.0 337.1L443.0 338.3L443.1 339.4L443.2 340.5L443.3 341.6L443.4 342.7L443.4 343.8L443.5 344.9L443.6 345.9L443.7 347.0L443.7 348.0L443.8 349.1L443.9 350.1L443.9 351.1L444.0 352.1L444.1 353.0L444.1 354.0L444.2 355.0L444.3 355.9L444.3 356.9L444.4 357.8L444.4 358.8L444.5 359.7L444.6 360.7L444.6 361.6L444.7 362.5L444.7 363.4L444.8 364.3L444.8 365.3L444.9 366.2L444.9 367.1L445.0 368.0L445.0 368.9L445.1 369.8L445.2 370.7L445.2 371.6L445.3 372.5L445.3 373.5L445.4 374.4L445.4 375.3L445.5 376.2L445.5 377.2L445.6 378.1L445.6 379.1L445.7 380.0L445.8 381.0L445.8 382.0L445.9 383.0L445.9 383.9L446.0 384.7L446.0 385.6L446.1 386.4L446.2 387.1L446.2 387.9L446.3 388.6L446.3 389.3L446.4 390.0L446.4 390.7L446.4 391.4L446.5 392.1L446.5 392.7L446.6 393.4L446.6 394.1L446.7 394.7L446.7 395.4L446.8 396.1L446.8 396.8L446.9 397.6L446.9 398.3L447.0 399.1L447.0 399.9L447.0 400.8L447.1 401.6L447.1 402.6L447.2 403.5L447.2 404.5L447.3 405.6L447.3 406.7L447.4 407.8L447.4 409.1L447.5 410.3L447.5 411.7L447.6 413.1L447.6 414.5L447.7 416.1L447.8 417.7L447.8 419.4L447.9 421.2L447.9 423.0L448.0 425.0L448.0 425.7L448.0 426.4L448.1 427.1L448.1 427.8L448.1 428.5L448.1 429.3L448.2 430.1L448.2 430.8L448.2 431.6L448.2 432.4L448.3 433.3L448.3 434.1L448.3 435.0L448.3 435.8L448.4 436.7L448.4 437.6L448.4 438.5L448.4 439.4L448.5 440.3L448.5 441.3L448.5 442.2L448.5 443.2L448.6 444.1L448.6 445.1L448.6 446.1L448.6 447.1L448.7 448.1L448.7 449.1L448.7 450.2L448.8 451.2L448.8 452.2L448.8 453.3L448.8 454.4L448.9 455.4L448.9 456.5L448.9 457.6L449.0 458.7L449.0 459.8L449.0 460.9L449.0 462.0L449.1 463.1L449.1 464.3L449.1 465.4L449.2 466.5L449.2 467.7L449.2 468.8L449.2 470.0L449.3 471.1L449.3 472.3L449.3 473.4L449.4 474.6L449.4 475.8L449.4 477.0L449.5 478.1L449.5 479.3L449.5 480.5L449.5 481.7L449.6 482.9L449.6 484.1L449.6 485.2L449.7 486.4L449.7 487.6L449.7 488.8L449.8 490.0L449.8 491.2L449.8 492.4L449.8 493.6L449.9 494.8L449.9 496.0L449.9 497.2L450.0 498.4L450.0 499.5L450.0 500.7L450.1 501.9L450.1 503.1L450.1 504.3L450.1 505.4L450.2 506.6L450.2 507.8L450.2 508.9L450.3 510.1L450.3 511.3L450.3 512.4L450.3 513.6L450.4 514.7L450.4 515.8L450.4 517.0L450.5 518.1L450.5 519.2L450.5 520.3L450.5 521.4L450.6 522.5L450.6 523.6L450.6 524.7L450.6 525.8L450.7 526.9L450.7 527.9L450.7 529.0L450.8 530.0L450.8 531.1L450.8 532.1L450.8 533.1L450.9 534.1L450.9 535.1L450.9 536.1L450.9 537.1L450.9 538.1L451.0 539.0L451.0 540.0L451.0 540.9L451.0 541.9L451.1 542.8L451.1 543.7L451.1 544.6L451.1 545.4L451.2 546.3L451.2 547.2L451.2 548.0L451.2 548.8L451.2 549.6L451.3 550.4L451.3 551.2L451.3 552.0L451.3 552.7L451.3 553.5L451.4 554.2L451.4 554.9L451.4 555.6L451.4 556.3L451.4 556.9L451.4 557.6L451.5 558.2L451.5 558.8L451.5 559.4L451.5 560.0L451.6 564.0L451.7 567.3L451.7 570.2L451.8 572.6L451.8 574.5L451.8 576.0L451.8 577.2L451.8 578.0L451.8 578.6L451.8 578.9L451.8 579.0L451.8 579.0L451.8 578.9L451.8 578.7L451.9 578.4L451.9 578.2L451.9 578.1L452.0 578.0L452.1 578.0L452.2 577.9L452.2 577.7L452.3 577.5L452.4 577.1L452.5 576.7L452.6 576.1L452.8 575.4L452.9 574.6L453.0 573.7L453.1 572.6L453.2 571.3L453.4 569.9L453.5 568.3L453.6 566.5L453.7 564.6L453.9 562.4L454.0 560.0L454.0 559.4L454.1 558.7L454.1 558.0L454.1 557.3L454.2 556.5L454.2 555.7L454.2 554.9L454.2 554.1L454.3 553.2L454.3 552.4L454.3 551.5L454.4 550.6L454.4 549.6L454.4 548.7L454.4 547.7L454.5 546.7L454.5 545.7L454.5 544.6L454.5 543.6L454.6 542.5L454.6 541.5L454.6 540.4L454.7 539.3L454.7 538.2L454.7 537.1L454.7 535.9L454.8 534.8L454.8 533.7L454.8 532.5L454.9 531.3L454.9 530.2L454.9 529.0L454.9 527.8L455.0 526.7L455.0 525.5L455.0 524.3L455.1 523.1L455.1 522.0L455.1 520.8L455.2 519.6L455.2 518.4L455.2 517.3L455.3 516.1L455.3 514.9L455.3 513.8L455.4 512.6L455.4 511.5L455.4 510.4L455.5 509.3L455.5 508.1L455.5 507.0L455.6 506.0L455.6 504.9L455.7 503.8L455.7 502.8L455.7 501.7L455.8 500.7L455.8 499.7L455.9 498.8L455.9 497.8L455.9 496.8L456.0 495.9L456.0 495.0L456.1 494.1L456.1 493.3L456.2 492.5L456.2 491.6L456.3 490.9L456.3 490.1L456.4 489.4L456.4 488.7L456.5 488.0L456.7 486.0L456.9 484.1L457.1 482.3L457.2 480.6L457.4 479.1L457.7 477.6L457.9 476.2L458.1 475.0L458.3 473.8L458.5 472.7L458.8 471.7L459.0 470.7L459.3 469.9L459.5 469.1L459.8 468.4L460.0 467.8L460.3 467.2L460.6 466.7L460.9 466.3L461.1 465.9L461.4 465.5L461.7 465.2L462.0 465.0L462.5 464.8L462.9 464.9L463.4 465.2L463.9 465.8L464.4 466.5L464.9 467.4L465.5 468.5L466.0 469.6L466.5 470.8L467.1 472.1L467.7 473.3L468.2 474.6L468.8 475.8L469.4 477.0L470.0 478.0L470.5 478.8L471.0 479.8L471.5 480.9L472.0 482.0L472.5 483.2L473.0 484.4L473.5 485.6L474.1 486.8L474.6 488.1L475.1 489.2L475.7 490.3L476.2 491.4L476.8 492.3L477.3 493.1L477.9 493.7L478.4 494.2L478.9 494.6L479.5 494.7L480.0 494.6L480.4 494.4L480.8 494.0L481.2 493.6L481.5 493.0L481.9 492.4L482.3 491.6L482.7 490.8L483.1 489.9L483.5 488.9L483.9 487.8L484.3 486.8L484.7 485.6L485.1 484.5L485.5 483.3L485.8 482.1L486.2 480.9L486.6 479.6L487.0 478.4L487.4 477.2L487.8 476.1L488.1 474.9L488.5 473.8L488.9 472.8L489.3 471.8L489.6 470.9L490.0 470.0L490.5 468.9L490.9 467.9L491.4 466.8L491.9 465.7L492.4 464.7L492.8 463.7L493.3 462.6L493.8 461.6L494.2 460.6L494.7 459.7L495.1 458.7L495.6 457.8L496.0 457.0L496.5 456.1L496.9 455.3L497.3 454.6L497.8 453.8L498.2 453.2L498.6 452.6L499.0 452.0L500.1 450.6L501.1 449.6L502.1 448.8L503.1 448.3L504.1 448.2L505.1 448.3L506.2 448.7L506.8 449.0L507.4 449.5L508.0 450.0L508.6 450.6L509.2 451.2L509.8 452.0L510.5 452.8L511.1 453.6L511.7 454.6L512.4 455.6L513.0 456.6L513.7 457.7L514.3 458.8L515.0 460.0L515.4 460.7L515.8 461.4L516.2 462.1L516.6 462.7L517.1 463.4L517.5 464.0L517.9 464.7L518.4 465.4L518.8 466.1L519.2 466.8L519.7 467.6L520.1 468.4L520.5 469.3L521.0 470.2L521.4 471.2L521.8 472.2L522.2 473.4L522.6 474.6L523.0 475.8L523.4 477.2L523.8 478.7L524.1 480.3L524.5 482.0L524.6 482.7L524.8 483.4L524.9 484.2L525.0 484.9L525.2 485.7L525.3 486.5L525.4 487.3L525.5 488.1L525.7 489.0L525.8 489.8L525.9 490.7L526.0 491.6L526.2 492.5L526.3 493.4L526.4 494.4L526.5 495.3L526.6 496.3L526.8 497.3L526.9 498.3L527.0 499.3L527.1 500.3L527.2 501.3L527.3 502.3L527.4 503.4L527.5 504.4L527.7 505.4L527.8 506.5L527.9 507.6L528.0 508.6L528.1 509.7L528.2 510.8L528.3 511.9L528.4 513.0L528.5 514.1L528.6 515.2L528.7 516.3L528.8 517.4L528.9 518.5L529.0 519.6L529.1 520.7L529.2 521.8L529.3 522.9L529.4 524.0L529.5 525.1L529.6 526.2L529.7 527.3L529.8 528.4L529.9 529.5L530.0 530.6L530.1 531.6L530.2 532.7L530.3 533.8L530.4 534.8L530.5 535.9L530.6 536.9L530.7 538.0L530.8 539.0L530.9 540.0L531.0 541.0L531.1 542.0L531.2 543.0L531.3 544.0L531.4 545.0L531.5 546.0L531.6 547.0L531.7 548.1L531.8 549.1L531.8 550.1L531.9 551.1L532.0 552.1L532.1 553.1L532.2 554.2L532.3 555.2L532.4 556.2L532.5 557.2L532.5 558.3L532.6 559.3L532.7 560.3L532.8 561.3L532.9 562.4L533.0 563.4L533.0 564.4L533.1 565.4L533.2 566.5L533.3 567.5L533.4 568.5L533.4 569.5L533.5 570.6L533.6 571.6L533.7 572.6L533.8 573.6L533.9 574.6L533.9 575.6L534.0 576.6L534.1 577.7L534.2 578.7L534.3 579.7L534.3 580.7L534.4 581.7L534.5 582.7L534.6 583.7L534.7 584.6L534.7 585.6L534.8 586.6L534.9 587.6L535.0 588.6L535.1 589.6L535.1 590.5L535.2 591.5L535.3 592.5L535.4 593.4L535.5 594.4L535.6 595.3L535.7 596.3L535.7 597.2L535.8 598.1L535.9 599.1L536.0 600.0L536.1 601.1L536.2 602.2L536.3 603.4L536.4 604.5L536.5 605.7L536.6 606.9L536.8 608.1L536.9 609.4L537.0 610.6L537.1 611.9L537.2 613.1L537.3 614.4L537.4 615.6L537.5 616.9L537.6 618.2L537.8 619.5L537.9 620.7L538.0 622.0L538.1 623.2L538.2 624.5L538.3 625.7L538.4 627.0L538.6 628.2L538.7 629.4L538.8 630.6L538.9 631.7L539.0 632.9L539.1 634.0L539.2 635.1L539.4 636.2L539.5 637.2L539.6 638.3L539.7 639.3L539.8 640.2L539.9 641.2L540.0 642.1L540.1 642.9L540.2 643.7L540.3 644.5L540.4 645.3L540.5 646.0L540.6 646.6L540.7 647.2L540.8 647.8L540.9 648.3L541.0 648.7L541.1 649.1L541.2 649.5L541.3 649.8L541.4 650.0L541.5 650.2L541.7 650.3L541.8 650.2L542.0 649.9L542.1 649.5L542.2 649.0L542.4 648.3L542.5 647.5L542.6 646.6L542.8 645.6L542.9 644.5L543.0 643.3L543.1 642.0L543.2 640.7L543.3 639.4L543.5 638.0L543.6 636.6L543.7 635.1L543.8 633.7L543.9 632.2L544.0 630.8L544.1 629.4L544.2 628.0L544.3 626.6L544.5 625.3L544.6 624.1L544.7 623.0L544.8 621.9L544.9 620.9L545.0 620.0L545.2 618.8L545.3 617.8L545.5 616.8L545.6 616.0L545.8 615.2L545.9 614.5L546.1 613.8L546.2 613.2L546.3 612.5L546.5 611.8L546.6 611.1L546.8 610.3L546.9 609.5L547.0 608.6L547.2 607.5L547.3 606.3L547.5 605.0L547.7 603.5L547.8 601.9L548.0 600.0L548.1 599.3L548.1 598.6L548.2 597.9L548.2 597.1L548.3 596.4L548.4 595.6L548.4 594.8L548.5 594.0L548.5 593.1L548.6 592.3L548.7 591.4L548.7 590.5L548.8 589.6L548.8 588.7L548.9 587.8L549.0 586.8L549.0 585.8L549.1 584.9L549.2 583.9L549.2 582.9L549.3 581.9L549.4 580.9L549.4 579.8L549.5 578.8L549.5 577.7L549.6 576.7L549.7 575.6L549.7 574.6L549.8 573.5L549.9 572.4L549.9 571.3L550.0 570.2L550.1 569.1L550.1 568.0L550.2 566.9L550.3 565.8L550.4 564.7L550.4 563.6L550.5 562.5L550.6 561.4L550.6 560.3L550.7 559.2L550.8 558.0L550.9 556.9L550.9 555.8L551.0 554.7L551.1 553.6L551.1 552.6L551.2 551.5L551.3 550.4L551.4 549.3L551.5 548.2L551.5 547.2L551.6 546.1L551.7 545.1L551.8 544.0L551.8 543.0L551.9 542.0L552.0 541.0L552.1 540.0L552.2 539.0L552.2 538.0L552.3 536.9L552.4 535.9L552.5 534.9L552.6 533.8L552.7 532.8L552.7 531.7L552.8 530.7L552.9 529.6L553.0 528.6L553.1 527.5L553.2 526.4L553.2 525.3L553.3 524.3L553.4 523.2L553.5 522.1L553.6 521.1L553.7 520.0L553.8 518.9L553.9 517.8L553.9 516.7L554.0 515.7L554.1 514.6L554.2 513.5L554.3 512.5L554.4 511.4L554.5 510.3L554.6 509.3L554.7 508.2L554.8 507.2L554.9 506.1L555.0 505.1L555.0 504.1L555.1 503.0L555.2 502.0L555.3 501.0L555.4 500.0L555.5 499.0L555.6 498.0L555.7 497.0L555.8 496.1L555.9 495.1L556.0 494.1L556.1 493.2L556.2 492.3L556.3 491.3L556.4 490.4L556.5 489.5L556.6 488.6L556.7 487.8L556.9 486.9L557.0 486.0L557.1 485.2L557.2 484.4L557.3 483.6L557.4 482.8L557.5 482.0L557.7 480.6L557.9 479.2L558.1 477.9L558.3 476.6L558.5 475.3L558.7 474.1L558.9 472.9L559.1 471.7L559.3 470.5L559.5 469.4L559.7 468.3L559.9 467.2L560.2 466.2L560.4 465.2L560.6 464.2L560.8 463.2L561.0 462.2L561.3 461.3L561.5 460.4L561.7 459.5L562.0 458.6L562.2 457.8L562.5 456.9L562.7 456.1L563.0 455.3L563.3 454.5L563.5 453.7L563.8 453.0L564.1 452.2L564.4 451.5L564.7 450.7L565.0 450.0L565.6 448.7L566.1 447.5L566.7 446.2L567.3 445.0L568.0 443.8L568.6 442.7L569.3 441.6L569.9 440.6L570.6 439.7L571.3 438.8L572.0 438.0L572.8 437.4L573.5 436.8L574.3 436.4L575.1 436.1L575.9 435.9L576.7 435.9L577.5 436.0L578.1 436.2L578.7 436.4L579.3 436.8L579.9 437.2L580.5 437.7L581.2 438.2L581.9 438.8L582.6 439.5L583.2 440.2L583.9 441.0L584.6 441.8L585.3 442.7L586.1 443.5L586.8 444.5L587.5 445.4L588.2 446.4L588.9 447.4L589.5 448.4L590.2 449.4L590.9 450.4L591.5 451.5L592.2 452.5L592.8 453.5L593.4 454.5L593.9 455.5L594.5 456.5L595.0 457.5L595.4 458.3L595.9 459.2L596.3 460.1L596.7 461.0L597.0 461.9L597.4 462.9L597.8 463.8L598.1 464.8L598.5 465.8L598.8 466.8L599.1 467.8L599.4 468.8L599.7 469.9L600.0 470.9L600.3 471.9L600.6 473.0L600.9 474.0L601.2 475.0L601.5 476.0L601.8 477.1L602.0 478.1L602.3 479.1L602.6 480.1L602.9 481.1L603.2 482.0L603.5 483.0L603.8 483.9L604.1 484.9L604.4 485.8L604.7 486.6L605.0 487.5L605.4 488.6L605.8 489.7L606.3 490.7L606.7 491.7L607.1 492.8L607.6 493.8L608.0 494.8L608.4 495.7L608.9 496.7L609.3 497.7L609.7 498.6L610.2 499.5L610.6 500.5L611.0 501.4L611.4 502.3L611.9 503.1L612.3 504.0L612.7 504.9L613.1 505.8L613.5 506.6L613.9 507.5L614.3 508.3L614.6 509.2L615.0 510.0L615.5 511.0L615.9 512.0L616.4 513.0L616.8 513.9L617.2 514.8L617.6 515.7L618.1 516.6L618.5 517.5L618.9 518.3L619.3 519.2L619.6 520.0L620.0 520.9L620.4 521.8L620.8 522.7L621.1 523.6L621.5 524.5L621.8 525.5L622.2 526.5L622.5 527.5L622.8 528.4L623.0 529.3L623.3 530.2L623.5 531.1L623.7 532.0L624.0 532.9L624.2 533.9L624.4 534.8L624.6 535.8L624.8 536.7L625.0 537.7L625.2 538.7L625.4 539.7L625.6 540.7L625.8 541.7L626.0 542.7L626.2 543.8L626.4 544.8L626.6 545.8L626.8 546.9L627.1 547.9L627.3 548.9L627.5 550.0L627.7 551.0L627.9 552.0L628.1 553.1L628.3 554.3L628.5 555.6L628.7 556.8L628.9 558.1L629.1 559.4L629.4 560.8L629.6 562.1L629.8 563.4L630.0 564.7L630.2 566.0L630.4 567.3L630.6 568.5L630.8 569.6L631.1 570.7L631.3 571.7L631.5 572.6L631.7 573.5L631.9 574.2L632.1 574.8L632.4 575.3L632.6 575.7L632.8 575.9L633.0 576.0L633.2 575.9L633.4 575.8L633.7 575.5L633.9 575.1L634.1 574.5L634.3 573.9L634.5 573.2L634.8 572.5L635.0 571.6L635.2 570.7L635.4 569.6L635.7 568.6L635.9 567.4L636.1 566.3L636.3 565.0L636.5 563.8L636.8 562.4L637.0 561.1L637.2 559.7L637.4 558.4L637.6 557.0L637.9 555.6L638.1 554.2L638.3 552.8L638.5 551.4L638.7 550.0L638.8 549.2L638.9 548.4L639.1 547.5L639.2 546.6L639.3 545.7L639.4 544.7L639.5 543.7L639.6 542.7L639.7 541.7L639.9 540.7L640.0 539.6L640.1 538.6L640.2 537.5L640.3 536.4L640.4 535.3L640.5 534.1L640.6 533.0L640.8 531.9L640.9 530.7L641.0 529.6L641.1 528.5L641.2 527.3L641.3 526.2L641.4 525.0L641.5 523.9L641.6 522.8L641.7 521.7L641.8 520.6L642.0 519.5L642.1 518.4L642.2 517.3L642.3 516.3L642.4 515.3L642.5 514.3L642.6 513.3L642.7 512.3L642.8 511.4L642.9 510.5L643.0 509.6L643.1 508.7L643.3 507.9L643.4 507.1L643.5 506.4L643.6 505.7L643.7 505.0L644.1 503.0L644.4 501.1L644.8 499.4L645.2 497.9L645.5 496.6L645.9 495.4L646.3 494.3L646.6 493.4L647.0 492.7L647.4 492.1L647.7 491.6L648.0 491.3L648.4 491.1L648.7 491.0L649.0 491.1L649.3 491.3L649.6 491.8L649.9 492.3L650.1 493.0L650.4 493.9L650.7 494.9L650.9 496.0L651.2 497.2L651.5 498.6L651.7 500.0L652.0 501.6L652.2 503.3L652.5 505.0L652.6 505.7L652.7 506.6L652.8 507.5L652.9 508.5L653.0 509.5L653.1 510.6L653.2 511.8L653.4 513.0L653.5 514.3L653.6 515.6L653.7 516.9L653.8 518.2L653.9 519.6L654.0 521.0L654.1 522.3L654.2 523.7L654.3 525.1L654.4 526.4L654.5 527.8L654.6 529.1L654.7 530.3L654.9 531.6L655.0 532.8L655.1 533.9L655.2 535.0L655.3 536.0L655.4 536.9L655.5 537.8L655.6 538.5L655.7 539.2L655.7 539.8L655.8 540.3L655.9 540.6L656.0 540.9L656.1 541.0L656.2 541.0L656.3 540.9L656.3 540.7L656.4 540.5L656.5 540.2L656.6 539.8L656.6 539.4L656.7 538.9L656.8 538.4L656.8 537.8L656.9 537.1L657.0 536.4L657.0 535.7L657.1 534.9L657.1 534.0L657.2 533.1L657.3 532.2L657.3 531.2L657.4 530.2L657.4 529.1L657.5 528.0L657.6 526.9L657.6 525.7L657.7 524.5L657.7 523.3L657.8 522.0L657.8 520.8L657.9 519.5L657.9 518.2L658.0 516.8L658.1 515.5L658.1 514.1L658.2 512.7L658.2 511.3L658.3 509.9L658.3 508.5L658.4 507.1L658.5 505.7L658.5 504.3L658.6 502.8L658.6 501.4L658.7 500.0L658.7 499.2L658.8 498.4L658.8 497.6L658.8 496.8L658.9 495.9L658.9 495.1L658.9 494.2L659.0 493.3L659.0 492.4L659.0 491.5L659.1 490.5L659.1 489.6L659.1 488.6L659.2 487.7L659.2 486.7L659.3 485.7L659.3 484.7L659.3 483.7L659.4 482.7L659.4 481.7L659.4 480.6L659.5 479.6L659.5 478.5L659.5 477.5L659.6 476.4L659.6 475.3L659.6 474.3L659.7 473.2L659.7 472.1L659.8 471.0L659.8 469.9L659.8 468.8L659.9 467.7L659.9 466.6L659.9 465.5L660.0 464.4L660.0 463.3L660.0 462.2L660.1 461.1L660.1 460.0L660.1 458.9L660.2 457.8L660.2 456.7L660.3 455.6L660.3 454.5L660.3 453.4L660.4 452.3L660.4 451.2L660.4 450.1L660.5 449.0L660.5 448.0L660.5 446.9L660.6 445.8L660.6 444.8L660.6 443.7L660.7 442.7L660.7 441.7L660.7 440.6L660.7 439.6L660.8 438.6L660.8 437.6L660.8 436.6L660.9 435.7L660.9 434.7L660.9 433.8L661.0 432.8L661.0 431.9L661.0 431.0L661.0 430.1L661.1 429.2L661.1 428.3L661.1 427.5L661.1 426.6L661.2 425.8L661.2 425.0L661.2 423.7L661.3 422.4L661.3 421.1L661.3 419.9L661.4 418.7L661.4 417.5L661.4 416.4L661.4 415.3L661.5 414.2L661.5 413.1L661.5 412.0L661.5 411.0L661.5 410.0L661.5 409.0L661.6 408.0L661.6 407.0L661.6 406.0L661.6 405.1L661.6 404.2L661.6 403.2L661.6 402.3L661.6 401.4L661.7 400.5L661.7 399.6L661.7 398.7L661.7 397.8L661.7 396.9L661.7 396.0L661.8 395.2L661.8 394.3L661.8 393.4L661.8 392.5L661.9 391.6L661.9 390.7L661.9 389.8L662.0 388.9L662.0 387.9L662.1 387.0L662.1 386.0L662.2 385.1L662.2 384.1L662.3 383.1L662.4 382.1L662.4 381.0L662.5 380.0L662.6 379.1L662.6 378.1L662.7 377.2L662.8 376.2L662.9 375.3L663.0 374.4L663.1 373.5L663.2 372.5L663.2 371.6L663.3 370.7L663.4 369.8L663.5 368.9L663.6 368.0L663.8 367.1L663.9 366.2L664.0 365.3L664.1 364.3L664.2 363.4L664.3 362.5L664.4 361.6L664.5 360.7L664.7 359.7L664.8 358.8L664.9 357.8L665.0 356.9L665.1 355.9L665.3 355.0L665.4 354.0L665.5 353.0L665.6 352.1L665.8 351.1L665.9 350.1L666.0 349.1L666.2 348.0L666.3 347.0L666.4 345.9L666.5 344.9L666.7 343.8L666.8 342.7L666.9 341.6L667.1 340.5L667.2 339.4L667.3 338.3L667.4 337.1L667.6 335.9L667.7 334.7L667.8 333.5L668.0 332.3L668.1 331.1L668.2 329.8L668.3 329.0L668.4 328.1L668.4 327.3L668.5 326.4L668.6 325.5L668.7 324.7L668.8 323.8L668.9 322.9L668.9 322.0L669.0 321.0L669.1 320.1L669.2 319.2L669.3 318.2L669.4 317.3L669.5 316.3L669.5 315.4L669.6 314.4L669.7 313.4L669.8 312.4L669.9 311.4L670.0 310.4L670.1 309.4L670.1 308.4L670.2 307.4L670.3 306.4L670.4 305.4L670.5 304.4L670.6 303.3L670.7 302.3L670.8 301.3L670.9 300.2L670.9 299.2L671.0 298.1L671.1 297.1L671.2 296.0L671.3 295.0L671.4 293.9L671.5 292.8L671.6 291.8L671.7 290.7L671.8 289.7L671.8 288.6L671.9 287.5L672.0 286.5L672.1 285.4L672.2 284.3L672.3 283.3L672.4 282.2L672.5 281.1L672.6 280.1L672.6 279.0L672.7 278.0L672.8 276.9L672.9 275.9L673.0 274.8L673.1 273.8L673.2 272.7L673.2 271.7L673.3 270.6L673.4 269.6L673.5 268.6L673.6 267.5L673.7 266.5L673.8 265.5L673.8 264.5L673.9 263.5L674.0 262.5L674.1 261.5L674.2 260.5L674.2 259.5L674.3 258.5L674.4 257.6L674.5 256.6L674.6 255.6L674.6 254.7L674.7 253.7L674.8 252.8L674.9 251.7L675.0 250.6L675.1 249.5L675.1 248.4L675.2 247.3L675.3 246.2L675.4 245.1L675.5 244.0L675.6 242.9L675.6 241.8L675.7 240.7L675.8 239.5L675.9 238.4L675.9 237.3L676.0 236.2L676.1 235.1L676.2 234.0L676.2 232.8L676.3 231.7L676.4 230.6L676.5 229.5L676.5 228.4L676.6 227.3L676.7 226.2L676.7 225.1L676.8 224.0L676.9 222.9L677.0 221.8L677.0 220.7L677.1 219.7L677.2 218.6L677.2 217.5L677.3 216.5L677.4 215.4L677.5 214.3L677.5 213.3L677.6 212.3L677.7 211.2L677.7 210.2L677.8 209.2L677.9 208.2L678.0 207.2L678.0 206.2L678.1 205.2L678.2 204.2L678.3 203.3L678.3 202.3L678.4 201.4L678.5 200.4L678.6 199.5L678.7 198.6L678.7 197.7L678.8 196.8L678.9 195.9L679.0 195.0L679.1 194.2L679.2 193.3L679.2 192.5L679.3 191.7L679.4 190.9L679.5 190.1L679.6 189.3L679.7 188.6L679.8 187.8L679.9 187.1L680.0 186.4L680.2 184.7L680.5 183.1L680.8 181.6L681.0 180.2L681.3 178.8L681.5 177.6L681.8 176.3L682.1 175.2L682.4 174.1L682.6 173.0L682.9 172.1L683.2 171.1L683.5 170.2L683.8 169.3L684.1 168.5L684.4 167.7L684.7 166.9L685.0 166.2L685.3 165.5L685.7 164.8L686.0 164.0L686.3 163.3L686.6 162.6L687.0 161.9L687.3 161.2L687.7 160.5L688.0 159.8L688.6 158.6L689.1 157.5L689.7 156.4L690.2 155.4L690.8 154.4L691.3 153.5L691.9 152.7L692.5 151.9L693.1 151.1L693.8 150.4L694.5 149.7L695.2 149.1L696.0 148.4L696.8 147.8L697.7 147.2L698.7 146.6L699.4 146.2L700.2 145.8L700.9 145.4L701.7 145.1L702.4 144.8L703.2 144.5L704.0 144.2L704.9 143.9L705.7 143.6L706.6 143.4L707.5 143.2L708.5 142.9L709.4 142.7L710.4 142.5L711.5 142.3L712.6 142.1L713.7 141.9L714.8 141.8L716.1 141.6L717.3 141.4L718.6 141.2L720.0 141.0L720.8 140.9L721.5 140.8L722.3 140.7L723.0 140.6L723.8 140.5L724.5 140.4L725.3 140.3L726.0 140.2L726.8 140.1L727.5 140.0L728.3 140.0L729.1 139.9L729.8 139.8L730.6 139.7L731.4 139.6L732.3 139.6L733.1 139.5L733.9 139.4L734.8 139.3L735.7 139.3L736.6 139.2L737.6 139.1L738.5 139.1L739.5 139.0L740.5 138.9L741.6 138.9L742.6 138.8L743.7 138.7L744.9 138.7L746.0 138.6L747.3 138.6L748.5 138.5L749.8 138.4L751.1 138.4L752.5 138.3L753.9 138.2L755.3 138.2L756.8 138.1L758.4 138.1L760.0 138.0L760.7 138.0L761.5 137.9L762.2 137.9L762.9 137.9L763.7 137.9L764.4 137.8L765.2 137.8L765.9 137.8L766.7 137.8L767.4 137.7L768.2 137.7L769.0 137.7L769.7 137.6L770.5 137.6L771.3 137.6L772.1 137.6L772.9 137.5L773.7 137.5L774.5 137.5L775.3 137.5L776.1 137.4L777.0 137.4L777.8 137.4L778.6 137.4L779.5 137.3L780.3 137.3L781.2 137.3L782.0 137.3L782.9 137.2L783.7 137.2L784.6 137.2L785.5 137.2L786.4 137.2L787.3 137.1L788.2 137.1L789.1 137.1L790.0 137.1L790.9 137.0L791.9 137.0L792.8 137.0L793.7 137.0L794.7 136.9L795.6 136.9L796.6 136.9L797.6 136.9L798.5 136.9L799.5 136.8L800.5 136.8L801.5 136.8L802.5 136.8L803.5 136.7L804.6 136.7L805.6 136.7L806.6 136.7L807.7 136.7L808.7 136.6L809.8 136.6L810.9 136.6L811.9 136.6L813.0 136.6L814.1 136.5L815.2 136.5L816.4 136.5L817.5 136.5L818.6 136.5L819.7 136.4L820.9 136.4L822.1 136.4L823.2 136.4L824.4 136.4L825.6 136.3L826.8 136.3L828.0 136.3L829.2 136.3L830.4 136.3L831.7 136.2L832.9 136.2L834.2 136.2L835.4 136.2L836.7 136.2L838.0 136.2L839.3 136.1L840.6 136.1L841.9 136.1L843.2 136.1L844.6 136.1L845.9 136.1L847.3 136.0L848.6 136.0L850.0 136.0L850.8 136.0L851.6 136.0L852.4 136.0L853.2 136.0L854.1 136.0L854.9 135.9L855.8 135.9L856.6 135.9L857.5 135.9L858.4 135.9L859.3 135.9L860.2 135.9L861.1 135.9L862.0 135.9L863.0 135.9L863.9 135.9L864.9 135.8L865.8 135.8L866.8 135.8L867.8 135.8L868.8 135.8L869.8 135.8L870.8 135.8L871.8 135.8L872.8 135.8L873.8 135.8L874.9 135.8L875.9 135.8L877.0 135.7L878.0 135.7L879.1 135.7L880.1 135.7L881.2 135.7L882.3 135.7L883.4 135.7L884.5 135.7L885.6 135.7L886.7 135.7L887.8 135.7L888.9 135.7L890.0 135.6L891.1 135.6L892.3 135.6L893.4 135.6L894.5 135.6L895.7 135.6L896.8 135.6L898.0 135.6L899.1 135.6L900.3 135.6L901.5 135.6L902.6 135.6L903.8 135.6L904.9 135.5L906.1 135.5L907.3 135.5L908.5 135.5L909.6 135.5L910.8 135.5L912.0 135.5L913.2 135.5L914.4 135.5L915.6 135.5L916.7 135.5L917.9 135.5L919.1 135.5L920.3 135.5L921.5 135.4L922.7 135.4L923.9 135.4L925.1 135.4L926.2 135.4L927.4 135.4L928.6 135.4L929.8 135.4L931.0 135.4L932.2 135.4L933.4 135.4L934.5 135.4L935.7 135.4L936.9 135.4L938.1 135.4L939.2 135.4L940.4 135.3L941.6 135.3L942.7 135.3L943.9 135.3L945.1 135.3L946.2 135.3L947.4 135.3L948.5 135.3L949.7 135.3L950.8 135.3L952.0 135.3L953.1 135.3L954.2 135.3L955.3 135.3L956.5 135.3L957.6 135.3L958.7 135.3L959.8 135.2L960.9 135.2L962.0 135.2L963.1 135.2L964.1 135.2L965.2 135.2L966.3 135.2L967.4 135.2L968.4 135.2L969.5 135.2L970.5 135.2L971.5 135.2L972.6 135.2L973.6 135.2L974.6 135.2L975.6 135.2L976.6 135.2L977.6 135.2L978.6 135.2L979.5 135.2L980.5 135.1L981.5 135.1L982.4 135.1L983.3 135.1L984.3 135.1L985.2 135.1L986.1 135.1L987.0 135.1L987.9 135.1L988.8 135.1L989.6 135.1L990.5 135.1L991.3 135.1L992.2 135.1L993.0 135.1L993.8 135.1L994.6 135.1L995.4 135.1L996.2 135.1L996.9 135.1L997.7 135.1L998.4 135.1L999.2 135.1L999.9 135.1L1000.6 135.0L1001.3 135.0L1001.9 135.0L1002.6 135.0L1003.3 135.0L1003.9 135.0L1004.5 135.0L1005.1 135.0L1005.7 135.0L1006.3 135.0L1006.9 135.0L1007.4 135.0L1008.0 135.0L1008.5 135.0L1009.0 135.0" stroke="#52ec34" stroke-width="1" fill="none" shape-rendering="crispEdges"/>
<path d="M220.1 135.9L221.0 135.9L221.9 135.9L222.8 135.9L223.6 135.9L224.5 135.9L225.3 135.9L226.1 136.0L226.9 136.0L227.7 136.0L228.5 136.0L229.2 136.0L230.0 136.0L231.5 136.0L233.0 136.0L234.5 136.1L235.9 136.1L237.3 136.1L238.7 136.1L240.0 136.1L241.4 136.1L242.7 136.2L244.0 136.2L245.3 136.2L246.5 136.2L247.8 136.2L249.0 136.3L250.2 136.3L251.4 136.3L252.5 136.3L253.7 136.3L254.8 136.4L255.9 136.4L257.0 136.4L258.1 136.4L259.1 136.4L260.2 136.5L261.2 136.5L262.2 136.5L263.2 136.5L264.2 136.5L265.2 136.6L266.2 136.6L267.1 136.6L268.1 136.6L269.0 136.6L269.9 136.7L270.8 136.7L271.7 136.7L272.6 136.7L273.5 136.8L274.4 136.8L275.2 136.8L276.1 136.8L276.9 136.8L277.8 136.9L278.6 136.9L279.5 136.9L280.3 136.9L281.1 137.0L281.9 137.0L282.8 137.0L283.6 137.0L284.4 137.0L285.2 137.1L286.0 137.1L286.8 137.1L287.6 137.1L288.4 137.2L289.3 137.2L290.1 137.2L290.9 137.2L291.7 137.3L292.5 137.3L293.3 137.3L294.1 137.3L295.0 137.4L295.8 137.4L296.6 137.4L297.5 137.4L298.3 137.5L299.1 137.5L300.0 137.5L301.2 137.5L302.4 137.6L303.6 137.6L304.7 137.6L305.9 137.7L307.1 137.7L308.2 137.8L309.3 137.8L310.5 137.8L311.6 137.9L312.7 137.9L313.8 138.0L314.9 138.0L316.0 138.0L317.1 138.1L318.2 138.1L319.2 138.2L320.3 138.2L321.4 138.2L322.4 138.3L323.4 138.3L324.5 138.4L325.5 138.4L326.5 138.5L327.5 138.5L328.5 138.5L329.5 138.6L330.5 138.6L331.4 138.7L332.4 138.7L333.4 138.8L334.3 138.8L335.2 138.8L336.2 138.9L337.1 138.9L338.0 139.0L338.9 139.0L339.8 139.0L340.7 139.1L341.6 139.1L342.5 139.2L343.3 139.2L344.2 139.2L345.1 139.3L345.9 139.3L346.7 139.4L347.6 139.4L348.4 139.4L349.2 139.5L350.0 139.5L351.3 139.6L352.6 139.6L353.8 139.6L355.0 139.7L356.2 139.7L357.3 139.7L358.4 139.8L359.5 139.8L360.6 139.8L361.6 139.8L362.6 139.9L363.6 139.9L364.6 139.9L365.5 139.9L366.5 139.9L367.4 140.0L368.3 140.0L369.2 140.0L370.1 140.1L371.0 140.1L371.9 140.2L372.8 140.2L373.7 140.3L374.5 140.4L375.4 140.4L376.3 140.5L377.2 140.6L378.1 140.7L379.1 140.9L380.0 141.0L381.1 141.2L382.1 141.3L383.2 141.5L384.3 141.7L385.4 141.9L386.5 142.1L387.5 142.3L388.6 142.5L389.7 142.7L390.8 142.9L391.9 143.2L392.9 143.4L394.0 143.7L395.0 143.9L396.1 144.2L397.1 144.5L398.1 144.7L399.1 145.0L400.0 145.3L400.9 145.6L401.8 145.9L402.7 146.2L403.6 146.6L404.4 146.9L405.2 147.2L405.9 147.6L406.6 147.9L407.8 148.5L408.8 149.2L409.8 149.9L410.6 150.6L411.4 151.3L412.1 152.1L412.7 152.9L413.3 153.7L413.9 154.5L414.4 155.3L414.9 156.2L415.4 157.1L415.9 158.0L416.4 158.9L417.0 159.8L417.5 160.6L418.0 161.4L418.4 162.3L418.8 163.1L419.3 164.0L419.7 164.8L420.1 165.7L420.4 166.6L420.8 167.5L421.2 168.4L421.6 169.4L421.9 170.4L422.3 171.4L422.7 172.5L423.0 173.5L423.4 174.6L423.8 175.8L424.1 176.6L424.4 177.4L424.7 178.2L424.9 179.0L425.2 179.8L425.5 180.5L425.8 181.3L426.1 182.1L426.4 182.9L426.7 183.7L427.0 184.6L427.2 185.4L427.5 186.3L427.8 187.3L428.1 188.3L428.4 189.3L428.7 190.4L428.9 191.5L429.2 192.7L429.5 193.9L429.7 195.3L430.0 196.7L430.2 198.1L430.5 199.7L430.6 200.4L430.7 201.2L430.8 201.9L430.9 202.7L431.0 203.5L431.2 204.3L431.3 205.1L431.4 205.9L431.5 206.7L431.6 207.6L431.7 208.4L431.8 209.3L431.9 210.1L432.0 211.0L432.1 211.9L432.2 212.8L432.3 213.7L432.4 214.7L432.4 215.6L432.5 216.5L432.6 217.5L432.7 218.5L432.8 219.4L432.9 220.4L433.0 221.4L433.1 222.4L433.2 223.4L433.3 224.5L433.4 225.5L433.5 226.5L433.6 227.6L433.7 228.7L433.8 229.7L433.9 230.8L434.0 231.9L434.1 233.0L434.1 234.1L434.2 235.2L434.3 236.3L434.4 237.4L434.5 238.6L434.6 239.7L434.7 240.9L434.8 242.0L434.9 243.2L435.0 244.4L435.2 245.6L435.3 246.7L435.4 247.9L435.5 249.1L435.6 250.4L435.7 251.6L435.8 252.8L435.9 253.7L436.0 254.5L436.0 255.4L436.1 256.3L436.2 257.2L436.3 258.1L436.4 259.0L436.4 259.9L436.5 260.9L436.6 261.8L436.7 262.8L436.8 263.7L436.9 264.7L437.0 265.7L437.0 266.7L437.1 267.7L437.2 268.7L437.3 269.7L437.4 270.7L437.5 271.8L437.6 272.8L437.7 273.8L437.8 274.9L437.9 275.9L437.9 277.0L438.0 278.0L438.1 279.1L438.2 280.2L438.3 281.2L438.4 282.3L438.5 283.4L438.6 284.5L438.7 285.5L438.8 286.6L438.9 287.7L439.0 288.8L439.0 289.9L439.1 290.9L439.2 292.0L439.3 293.1L439.4 294.2L439.5 295.3L439.6 296.3L439.7 297.4L439.8 298.5L439.9 299.6L440.0 300.6L440.1 301.7L440.1 302.8L440.2 303.8L440.3 304.9L440.4 305.9L440.5 307.0L440.6 308.0L440.7 309.1L440.8 310.1L440.8 311.1L440.9 312.1L441.0 313.1L441.1 314.1L441.2 315.1L441.3 316.1L441.3 317.1L441.4 318.1L441.5 319.0L441.6 320.0L441.7 320.9L441.7 321.9L441.8 322.8L441.9 323.7L442.0 324.6L442.0 325.5L442.1 326.4L442.2 327.3L442.3 328.1L442.3 329.0L442.4 329.8L442.5 331.1L442.6 332.3L442.7 333.5L442.8 334.7L442.9 335.9L443.0 337.1L443.1 338.3L443.2 339.4L443.3 340.5L443.4 341.6L443.5 342.7L443.6 343.8L443.7 344.9L443.8 345.9L443.8 347.0L443.9 348.0L444.0 349.1L444.1 350.1L444.2 351.1L444.3 352.1L444.3 353.0L444.4 354.0L444.5 355.0L444.6 355.9L444.7 356.9L444.7 357.8L444.8 358.8L444.9 359.7L445.0 360.7L445.0 361.6L445.1 362.5L445.2 363.4L445.2 364.3L445.3 365.3L445.4 366.2L445.4 367.1L445.5 368.0L445.6 368.9L445.6 369.8L445.7 370.7L445.8 371.6L445.8 372.5L445.9 373.5L446.0 374.4L446.0 375.3L446.1 376.2L446.1 377.2L446.2 378.1L446.2 379.1L446.3 380.0L446.4 381.1L446.4 382.1L446.5 383.1L446.5 384.2L446.6 385.2L446.6 386.2L446.7 387.2L446.7 388.3L446.7 389.3L446.8 390.3L446.8 391.3L446.9 392.3L446.9 393.3L446.9 394.3L446.9 395.2L447.0 396.2L447.0 397.2L447.0 398.2L447.1 399.2L447.1 400.1L447.1 401.1L447.1 402.1L447.2 403.1L447.2 404.0L447.2 405.0L447.2 406.0L447.3 407.0L447.3 407.9L447.3 408.9L447.3 409.9L447.4 410.9L447.4 411.9L447.4 412.8L447.5 413.8L447.5 414.8L447.5 415.8L447.6 416.8L447.6 417.8L447.7 418.8L447.7 419.9L447.8 420.9L447.8 421.9L447.9 422.9L447.9 424.0L448.0 425.0L448.1 426.0L448.1 427.0L448.2 428.0L448.2 429.1L448.3 430.2L448.3 431.3L448.4 432.4L448.5 433.6L448.5 434.7L448.6 435.9L448.6 437.1L448.7 438.3L448.7 439.5L448.8 440.7L448.9 442.0L448.9 443.2L449.0 444.5" stroke="#a06a10" stroke-width="1" fill="none" shape-rendering="crispEdges" stroke-dasharray="3 9"/>
<path d="M661.0 394.2L661.1 393.2L661.1 392.2L661.2 391.2L661.3 390.3L661.3 389.3L661.4 388.2L661.4 387.2L661.5 386.2L661.6 385.2L661.7 384.2L661.7 383.1L661.8 382.1L661.9 381.1L662.0 380.0L662.1 379.1L662.2 378.1L662.3 377.2L662.4 376.2L662.4 375.3L662.5 374.4L662.6 373.5L662.8 372.5L662.9 371.6L663.0 370.7L663.1 369.8L663.2 368.9L663.3 368.0L663.4 367.1L663.5 366.2L663.7 365.3L663.8 364.3L663.9 363.4L664.0 362.5L664.2 361.6L664.3 360.7L664.4 359.7L664.5 358.8L664.7 357.8L664.8 356.9L664.9 355.9L665.1 355.0L665.2 354.0L665.4 353.0L665.5 352.1L665.6 351.1L665.8 350.1L665.9 349.1L666.0 348.0L666.2 347.0L666.3 345.9L666.5 344.9L666.6 343.8L666.7 342.7L666.9 341.6L667.0 340.5L667.1 339.4L667.3 338.3L667.4 337.1L667.5 335.9L667.7 334.7L667.8 333.5L667.9 332.3L668.1 331.1L668.2 329.8L668.3 329.0L668.4 328.1L668.5 327.3L668.5 326.4L668.6 325.5L668.7 324.7L668.8 323.8L668.9 322.9L669.0 322.0L669.0 321.0L669.1 320.1L669.2 319.2L669.3 318.2L669.4 317.3L669.5 316.3L669.6 315.4L669.7 314.4L669.7 313.4L669.8 312.4L669.9 311.4L670.0 310.4L670.1 309.4L670.2 308.4L670.3 307.4L670.4 306.4L670.5 305.4L670.5 304.4L670.6 303.3L670.7 302.3L670.8 301.3L670.9 300.2L671.0 299.2L671.1 298.1L671.2 297.1L671.3 296.0L671.3 295.0L671.4 293.9L671.5 292.8L671.6 291.8L671.7 290.7L671.8 289.7L671.9 288.6L672.0 287.5L672.0 286.5L672.1 285.4L672.2 284.3L672.3 283.3L672.4 282.2L672.5 281.1L672.6 280.1L672.7 279.0L672.7 278.0L672.8 276.9L672.9 275.9L673.0 274.8L673.1 273.8L673.2 272.7L673.3 271.7L673.3 270.6L673.4 269.6L673.5 268.6L673.6 267.5L673.7 266.5L673.8 265.5L673.8 264.5L673.9 263.5L674.0 262.5L674.1 261.5L674.2 260.5L674.3 259.5L674.3 258.5L674.4 257.6L674.5 256.6L674.6 255.6L674.6 254.7L674.7 253.7L674.8 252.8L674.9 251.7L675.0 250.6L675.1 249.5L675.1 248.4L675.2 247.3L675.3 246.2L675.4 245.1L675.5 244.0L675.6 242.9L675.6 241.8L675.7 240.7L675.8 239.5L675.9 238.4L675.9 237.3L676.0 236.2L676.1 235.1L676.2 234.0L676.2 232.8L676.3 231.7L676.4 230.6L676.5 229.5L676.5 228.4L676.6 227.3L676.7 226.2L676.7 225.1L676.8 224.0L676.9 222.9L677.0 221.8L677.0 220.7L677.1 219.7L677.2 218.6L677.2 217.5L677.3 216.5L677.4 215.4L677.5 214.3L677.5 213.3L677.6 212.3L677.7 211.2L677.7 210.2L677.8 209.2L677.9 208.2L678.0 207.2L678.0 206.2L678.1 205.2L678.2 204.2L678.3 203.3L678.3 202.3L678.4 201.4L678.5 200.4L678.6 199.5L678.7 198.6L678.7 197.7L678.8 196.8L678.9 195.9L679.0 195.0L679.1 194.2L679.2 193.3L679.2 192.5L679.3 191.7L679.4 190.9L679.5 190.1L679.6 189.3L679.7 188.6L679.8 187.8L679.9 187.1L680.0 186.4L680.2 184.7L680.5 183.1L680.8 181.6L681.0 180.2L681.3 178.8L681.5 177.6L681.8 176.3L682.1 175.2L682.4 174.1L682.6 173.0L682.9 172.1L683.2 171.1L683.5 170.2L683.8 169.3L684.1 168.5L684.4 167.7L684.7 166.9L685.0 166.2L685.3 165.5L685.7 164.8L686.0 164.0L686.3 163.3L686.6 162.6L687.0 161.9L687.3 161.2L687.7 160.5L688.0 159.8L688.6 158.6L689.1 157.5L689.7 156.4L690.2 155.4L690.8 154.4L691.3 153.5L691.9 152.7L692.5 151.9L693.1 151.1L693.8 150.4L694.5 149.7L695.2 149.1L696.0 148.4L696.8 147.8L697.7 147.2L698.7 146.6L699.4 146.2L700.2 145.8L700.9 145.4L701.7 145.1L702.4 144.8L703.2 144.5L704.0 144.2L704.9 143.9L705.7 143.6L706.6 143.4L707.5 143.2L708.5 142.9L709.4 142.7L710.4 142.5L711.5 142.3L712.6 142.1L713.7 141.9L714.8 141.8L716.1 141.6L717.3 141.4L718.6 141.2L720.0 141.0L720.8 140.9L721.5 140.8L722.3 140.7L723.0 140.6L723.8 140.5L724.5 140.4L725.3 140.3L726.0 140.2L726.8 140.1L727.5 140.0L728.3 140.0L729.1 139.9L729.8 139.8L730.6 139.7L731.4 139.6L732.3 139.6L733.1 139.5L733.9 139.4L734.8 139.3L735.7 139.3L736.6 139.2L737.6 139.1L738.5 139.1L739.5 139.0L740.5 138.9L741.6 138.9L742.6 138.8L743.7 138.7L744.9 138.7L746.0 138.6L747.3 138.6L748.5 138.5L749.8 138.4L751.1 138.4L752.5 138.3L753.9 138.2L755.3 138.2L756.8 138.1L758.4 138.1L760.0 138.0L760.7 138.0L761.5 137.9L762.2 137.9L762.9 137.9L763.7 137.9L764.4 137.8L765.2 137.8L765.9 137.8L766.7 137.8L767.4 137.7L768.2 137.7L769.0 137.7L769.7 137.6L770.5 137.6L771.3 137.6L772.1 137.6L772.9 137.5L773.7 137.5L774.5 137.5L775.3 137.5L776.1 137.4L777.0 137.4L777.8 137.4L778.6 137.4L779.5 137.3L780.3 137.3L781.2 137.3L782.0 137.3L782.9 137.2L783.7 137.2L784.6 137.2L785.5 137.2L786.4 137.2L787.3 137.1L788.2 137.1L789.1 137.1L790.0 137.1L790.9 137.0L791.9 137.0L792.8 137.0L793.7 137.0L794.7 136.9L795.6 136.9L796.6 136.9L797.6 136.9L798.5 136.9L799.5 136.8L800.5 136.8L801.5 136.8L802.5 136.8L803.5 136.7L804.6 136.7L805.6 136.7L806.6 136.7L807.7 136.7L808.7 136.6L809.8 136.6L810.9 136.6L811.9 136.6L813.0 136.6L814.1 136.5L815.2 136.5L816.4 136.5L817.5 136.5L818.6 136.5L819.7 136.4L820.9 136.4L822.1 136.4L823.2 136.4L824.4 136.4L825.6 136.3L826.8 136.3L828.0 136.3L829.2 136.3L830.4 136.3L831.7 136.2L832.9 136.2L834.2 136.2L835.4 136.2L836.7 136.2L838.0 136.2L839.3 136.1L840.6 136.1L841.9 136.1L843.2 136.1L844.6 136.1L845.9 136.1L847.3 136.0L848.6 136.0L850.0 136.0L850.8 136.0L851.6 136.0L852.4 136.0L853.2 136.0L854.1 136.0L854.9 135.9L855.8 135.9L856.6 135.9L857.5 135.9L858.4 135.9L859.3 135.9L860.2 135.9L861.1 135.9L862.0 135.9L863.0 135.9L863.9 135.9L864.9 135.8L865.8 135.8L866.8 135.8L867.8 135.8L868.8 135.8L869.8 135.8L870.8 135.8L871.8 135.8L872.8 135.8L873.8 135.8L874.9 135.8L875.9 135.8L877.0 135.7L878.0 135.7L879.1 135.7L880.1 135.7L881.2 135.7L882.3 135.7L883.4 135.7L884.5 135.7L885.6 135.7L886.7 135.7L887.8 135.7L888.9 135.7L890.0 135.6L891.1 135.6L892.3 135.6L893.4 135.6L894.5 135.6L895.7 135.6L896.8 135.6L898.0 135.6L899.1 135.6" stroke="#a06a10" stroke-width="1" fill="none" shape-rendering="crispEdges" stroke-dasharray="3 9"/>
<path d="M548.5 190.0L539.5 175.0L557.5 175.0Z" stroke="#dc6cf4" stroke-width="1" fill="none" shape-rendering="crispEdges"/>
<text x="548.5" y="175.0" fill="#dc6cf4" text-anchor="middle" font-family="Liberation Sans" font-size="16">1</text>
<path d="M489.0 248.0L480.0 263.0L498.0 263.0Z" stroke="#dc6cf4" stroke-width="1" fill="none" shape-rendering="crispEdges"/>
<text x="489.0" y="281.0" fill="#dc6cf4" text-anchor="middle" font-family="Liberation Sans" font-size="16">2</text>
<path d="M608.0 226.0L599.0 241.0L617.0 241.0Z" stroke="#dc6cf4" stroke-width="1" fill="none" shape-rendering="crispEdges"/>
<text x="608.0" y="261.0" fill="#dc6cf4" text-anchor="middle" font-family="Liberation Sans" font-size="16">3</text>
<path d="M488.5 141.0L479.5 156.0L497.5 156.0Z" stroke="#0ea3ad" stroke-width="1" fill="none" shape-rendering="crispEdges"/>
<text x="488.5" y="176.0" fill="#0ea3ad" text-anchor="middle" font-family="Liberation Sans" font-size="16">2</text>
<path d="M548.5 141.0L539.5 156.0L557.5 156.0Z" stroke="#0ea3ad" stroke-width="1" fill="none" shape-rendering="crispEdges"/>
<text x="548.5" y="176.0" fill="#0ea3ad" text-anchor="middle" font-family="Liberation Sans" font-size="16">1</text>
<path d="M608.5 141.0L599.5 156.0L617.5 156.0Z" stroke="#0ea3ad" stroke-width="1" fill="none" shape-rendering="crispEdges"/>
<text x="608.5" y="176.0" fill="#0ea3ad" text-anchor="middle" font-family="Liberation Sans" font-size="16">3</text>
<path d="M288.0 492.0L279.0 507.0L297.0 507.0Z" stroke="#0ea3ad" stroke-width="1" fill="none" shape-rendering="crispEdges"/>
<text x="288.0" y="531.0" fill="#0ea3ad" text-anchor="middle" font-family="Liberation Sans" font-size="16">5</text>
<path d="M809.0 492.0L800.0 507.0L818.0 507.0Z" stroke="#0ea3ad" stroke-width="1" fill="none" shape-rendering="crispEdges"/>
<text x="809.0" y="524.0" fill="#0ea3ad" text-anchor="middle" font-family="Liberation Sans" font-size="16">6</text>
<path d="M149.0 668.0L140.0 683.0L158.0 683.0Z" stroke="#0ea3ad" stroke-width="1" fill="none" shape-rendering="crispEdges"/>
<text x="149.0" y="698.0" fill="#0ea3ad" text-anchor="middle" font-family="Liberation Sans" font-size="16">4</text>
<path d="M950.0 690.0L941.0 675.0L959.0 675.0Z" stroke="#0ea3ad" stroke-width="1" fill="none" shape-rendering="crispEdges"/>
<path d="M489.0 512.0L480.0 527.0L498.0 527.0Z" stroke="#a06a10" stroke-width="1" fill="none" shape-rendering="crispEdges"/>
<text x="489.0" y="548.0" fill="#a06a10" text-anchor="middle" font-family="Liberation Sans" font-size="16">2</text>
<path d="M609.0 530.0L600.0 545.0L618.0 545.0Z" stroke="#a06a10" stroke-width="1" fill="none" shape-rendering="crispEdges"/>
<text x="609.0" y="566.0" fill="#a06a10" text-anchor="middle" font-family="Liberation Sans" font-size="16">3</text>
<path d="M548.0 572.0L539.0 587.0L557.0 587.0Z" stroke="#a06a10" stroke-width="1" fill="none" shape-rendering="crispEdges"/>
<path d="M577.5 436.0L568.5 421.0L586.5 421.0Z" stroke="#a06a10" stroke-width="1" fill="none" shape-rendering="crispEdges"/>
<text x="578.0" y="417.0" fill="#a06a10" text-anchor="middle" font-family="Liberation Sans" font-size="16">8</text>
<path d="M489.0 480.0L480.0 495.0L498.0 495.0Z" stroke="#52ec34" stroke-width="1" fill="none" shape-rendering="crispEdges"/>
<text x="489.0" y="518.0" fill="#52ec34" text-anchor="middle" font-family="Liberation Sans" font-size="16">2</text>
<path d="M609.0 503.0L600.0 518.0L618.0 518.0Z" stroke="#52ec34" stroke-width="1" fill="none" shape-rendering="crispEdges"/>
<text x="609.0" y="536.0" fill="#52ec34" text-anchor="middle" font-family="Liberation Sans" font-size="16">3</text>
<path d="M548.0 563.0L539.0 578.0L557.0 578.0Z" stroke="#52ec34" stroke-width="1" fill="none" shape-rendering="crispEdges"/>
<path d="M577.5 436.0L568.5 421.0L586.5 421.0Z" stroke="#52ec34" stroke-width="1" fill="none" shape-rendering="crispEdges"/>
<text x="578.0" y="416.0" fill="#52ec34" text-anchor="middle" font-family="Liberation Sans" font-size="16">8</text>
<path d="M78 127L88 133.5L78 140Z" fill="#00a3a8"/>
<path d="M1020 127L1009 133.5L1020 140Z" fill="#00a3a8"/>
<path d="M1020 418L1009 425L1020 432Z" fill="#e070f8"/>
</svg>
</div>
<div class="abs" style="left:0;top:0">
<div class="mr" style="top:144px;color:#ac7412"><span class="m1">1:</span><span class="m2">9.728 00 GHz</span><span class="m3">-37.40 dB</span></div>
<div class="mr" style="top:164px;color:#ac7412"><span class="m1">2:</span><span class="m2">9.698 00 GHz</span><span class="m3">-32.37 dB</span></div>
<div class="mr" style="top:184px;color:#ac7412"><span class="m1">3:</span><span class="m2">9.758 00 GHz</span><span class="m3">-34.05 dB</span></div>
<div class="mr" style="top:204px;color:#ac7412"><span class="m1">8:</span><span class="m2">9.742 95 GHz</span><span class="m3">-25.87 dB</span></div>
<div class="mr" style="top:224px;color:#14a8b4"><span class="m1">1:</span><span class="m2">9.728 00 GHz</span><span class="m3">-1.16 dB</span></div>
<div class="mr" style="top:244px;color:#14a8b4"><span class="m1">2:</span><span class="m2">9.698 00 GHz</span><span class="m3">-1.30 dB</span></div>
<div class="mr" style="top:264px;color:#14a8b4"><span class="m1">3:</span><span class="m2">9.758 00 GHz</span><span class="m3">-1.25 dB</span></div>
<div class="mr" style="top:284px;color:#14a8b4"><span class="m1">4:</span><span class="m2">9.528 00 GHz</span><span class="m3">-90.83 dB</span></div>
<div class="mr" style="top:304px;color:#14a8b4"><span class="m1">5:</span><span class="m2">9.598 00 GHz</span><span class="m3">-61.98 dB</span></div>
<div class="mr" style="top:324px;color:#14a8b4"><span class="m1">6:</span><span class="m2">9.858 00 GHz</span><span class="m3">-60.87 dB</span></div>
<div class="mr" style="top:344px;color:#14a8b4"><span class="m1">&gt; 7:</span><span class="m2">9.928 00 GHz</span><span class="m3">-95.14 dB</span></div>
<div class="mr" style="top:364px;color:#d878f0"><span class="m1">1:</span><span class="m2">9.728 00 GHz</span><span class="m3">-1.16 dB</span></div>
<div class="mr" style="top:384px;color:#d878f0"><span class="m1">2:</span><span class="m2">9.698 00 GHz</span><span class="m3">-1.30 dB</span></div>
<div class="mr" style="top:404px;color:#d878f0"><span class="m1">3:</span><span class="m2">9.758 00 GHz</span><span class="m3">-1.25 dB</span></div>
<div class="mr" style="top:424px;color:#5aee3c"><span class="m1">1:</span><span class="m2">9.728 00 GHz</span><span class="m3">-36.95 dB</span></div>
<div class="mr" style="top:444px;color:#5aee3c"><span class="m1">2:</span><span class="m2">9.698 00 GHz</span><span class="m3">-29.63 dB</span></div>
<div class="mr" style="top:464px;color:#5aee3c"><span class="m1">3:</span><span class="m2">9.758 00 GHz</span><span class="m3">-31.49 dB</span></div>
<div class="mr" style="top:484px;color:#5aee3c"><span class="m1">8:</span><span class="m2">9.742 95 GHz</span><span class="m3">-25.80 dB</span></div>
</div>

<div id="panel">
<div id="phd">
<div class="abs" style="left:13px;top:13px;color:#fff;font-size:16px;letter-spacing:-0.3px">Avg BW</div>
<div class="abs" style="left:215px;top:8px;width:25px;height:24px;border-radius:4px;border:1px solid #a4acb8;background:#1c2838;padding:1px">
<div style="width:21px;height:20px;border-radius:3px;background:radial-gradient(ellipse at 50% 100%,#4a9a88 0%,#3a7478 40%,#2f5c68 100%);position:relative;overflow:hidden"><div style="position:absolute;left:0;top:0;width:21px;height:7px;background:#9aacb6"></div>
<svg width="21" height="20" viewBox="0 0 21 20" style="position:absolute;left:0;top:0"><path d="M5.8 6.2L15 14.8M15 6.2L5.8 14.8" stroke="#fff" stroke-width="2.4"/></svg></div></div>
</div>
<div id="pbody">
<div class="btn" style="top:9px;width:37px;height:72px"><div class="abs" style="left:8px;top:31px;width:21px;height:11px;border-radius:3px;background:linear-gradient(#8a8a8a,#6a6a6a);border:1px solid #5a5a5a"></div></div>
<div class="btn" style="top:9px;left:47px;width:107px;height:72px"><div style="padding-top:11px">Averaging</div><div class="vb" style="left:6px;top:43px;width:94px">3000</div></div>
<div class="btn" style="top:92px;height:72px;line-height:19px;padding-top:17px">Averaging<br>Restart</div>
<div class="btn" style="top:175px;height:72px"><div style="padding-top:11px">Average Type</div><div class="vb" style="top:43px;display:flex;color:#3a3a3a"><div style="width:67px;color:#a8a8a8;background:linear-gradient(#d4d4d6,#dcdcde)">point</div><div style="flex:1;letter-spacing:-0.4px">SWEEP</div></div></div>
<div class="blank" style="top:258px;height:73px"></div>
<div class="abs" style="left:2px;top:337px;width:156px;height:80px;border-radius:7px;border:2px solid #6a9ad0"></div>
<div class="btn" style="top:341px;height:73px"><div style="padding-top:11px">IF Bandwidth</div><div class="vb" style="top:43px">1 kHz</div></div>
<div class="btn" style="top:425px;height:72px"><div style="padding-top:11px;padding-right:16px">IF BW Shape <span style="position:absolute;right:6px;top:12px;font-size:12px;color:#707070">&#9660;</span></div><div class="vb" style="top:43px">Standard</div></div>
<div class="btn" style="top:508px;height:72px"><div style="padding-top:11px">LF Auto BW</div><div class="vb" style="top:43px;display:flex"><div style="width:67px">ON</div><div style="flex:1;color:#a8a8a8;background:linear-gradient(#d4d4d6,#dcdcde)">off</div></div></div>
<div class="blank" style="top:590px;height:74px"></div>
</div>
<div class="abs" style="left:158px;top:104px;width:1px;height:607px;background:#46463e"></div>
<div class="abs" style="left:159px;top:39px;width:89px;height:65px;background:#7e7e88"></div>
<div class="tab" style="top:65px;color:#f4f4f4">Main</div>
<div class="abs" style="left:158px;top:104px;width:91px;height:64px;border-radius:9px 0 0 0;border:1px solid #444;background:#5a5a5a"></div>
<div class="tab" style="top:128px">Smoothing</div>
<div class="abs" style="left:158px;top:168px;width:91px;height:64px;border:1px solid #444;background:#5a5a5a"></div>
<div class="tab" style="top:181px;line-height:19px">Delay<br>Aperture</div>
</div>

<div id="status">
<div class="sb" style="left:4px;top:4px;width:46px">Tr 2</div>
<div class="sb" style="left:55px;top:4px;width:52px">Ch 1</div>
<div class="sb" style="left:113px;top:4px;width:59px">IntTrig</div>
<div class="sb" style="left:178px;top:4px;width:51px">Swp *</div>
<div class="sb" style="left:235px;top:4px;width:75px">BW=1k</div>
<div class="sb" style="left:316px;top:4px;width:82px">C  2-Port</div>
<div class="sb dis" style="left:403px;top:4px;width:50px">SrcCal</div>
<div class="sb dis" style="left:460px;top:4px;width:38px">Fix</div>
<div class="sb dis" style="left:503px;top:4px;width:46px">Pulse</div>
<div class="sb" style="left:555px;top:4px;width:721px"></div>
<div class="sb dis" style="left:4px;top:27px;width:39px">Svc</div>
<div class="sb" style="left:49px;top:27px;width:62px">RFOn</div>
<div class="sb" style="left:117px;top:27px;width:81px">UpdateOn</div>
<div class="sb" style="left:204px;top:27px;width:62px">IntRef</div>
<div class="sb" style="left:272px;top:27px;width:1004px"></div>
<div class="abs" style="left:0;top:50px;width:1280px;height:2px;background:#101010"></div>
</div>

<svg id="wm" width="1280" height="801" viewBox="0 0 1280 801" style="pointer-events:none"><g font-family="Liberation Serif" font-weight="bold" font-size="68" fill="rgba(0,0,0,0.10)"><text transform="translate(200.5 364) scale(1.10 1)">w</text><text transform="translate(260.3 364) scale(1.10 1)">w</text><text transform="translate(320.0 364) scale(1.10 1)">w</text><text transform="translate(363.6 364) scale(1.10 1)">.</text><text transform="translate(382.0 364) scale(1.10 1)">x</text><text transform="translate(425.8 364) scale(1.10 1)">a</text><text transform="translate(465.4 364) scale(1.10 1)">h</text><text transform="translate(505.7 364) scale(1.10 1)">x</text><text transform="translate(548.9 364) scale(1.10 1)">m</text><text transform="translate(608.9 364) scale(1.10 1)">i</text><text transform="translate(632.4 364) scale(1.10 1)">c</text><text transform="translate(670.9 364) scale(1.10 1)">r</text><text transform="translate(701.8 364) scale(1.10 1)">o</text><text transform="translate(736.0 364) scale(1.10 1)">w</text><text transform="translate(789.8 364) scale(1.10 1)">a</text><text transform="translate(825.0 364) scale(1.10 1)">v</text><text transform="translate(862.8 364) scale(1.10 1)">e</text><text transform="translate(915.8 364) scale(1.10 1)">.</text><text transform="translate(935.8 364) scale(1.10 1)">c</text><text transform="translate(967.8 364) scale(1.10 1)">o</text><text transform="translate(1009.9 364) scale(1.10 1)">m</text></g></svg>
</body></html>
